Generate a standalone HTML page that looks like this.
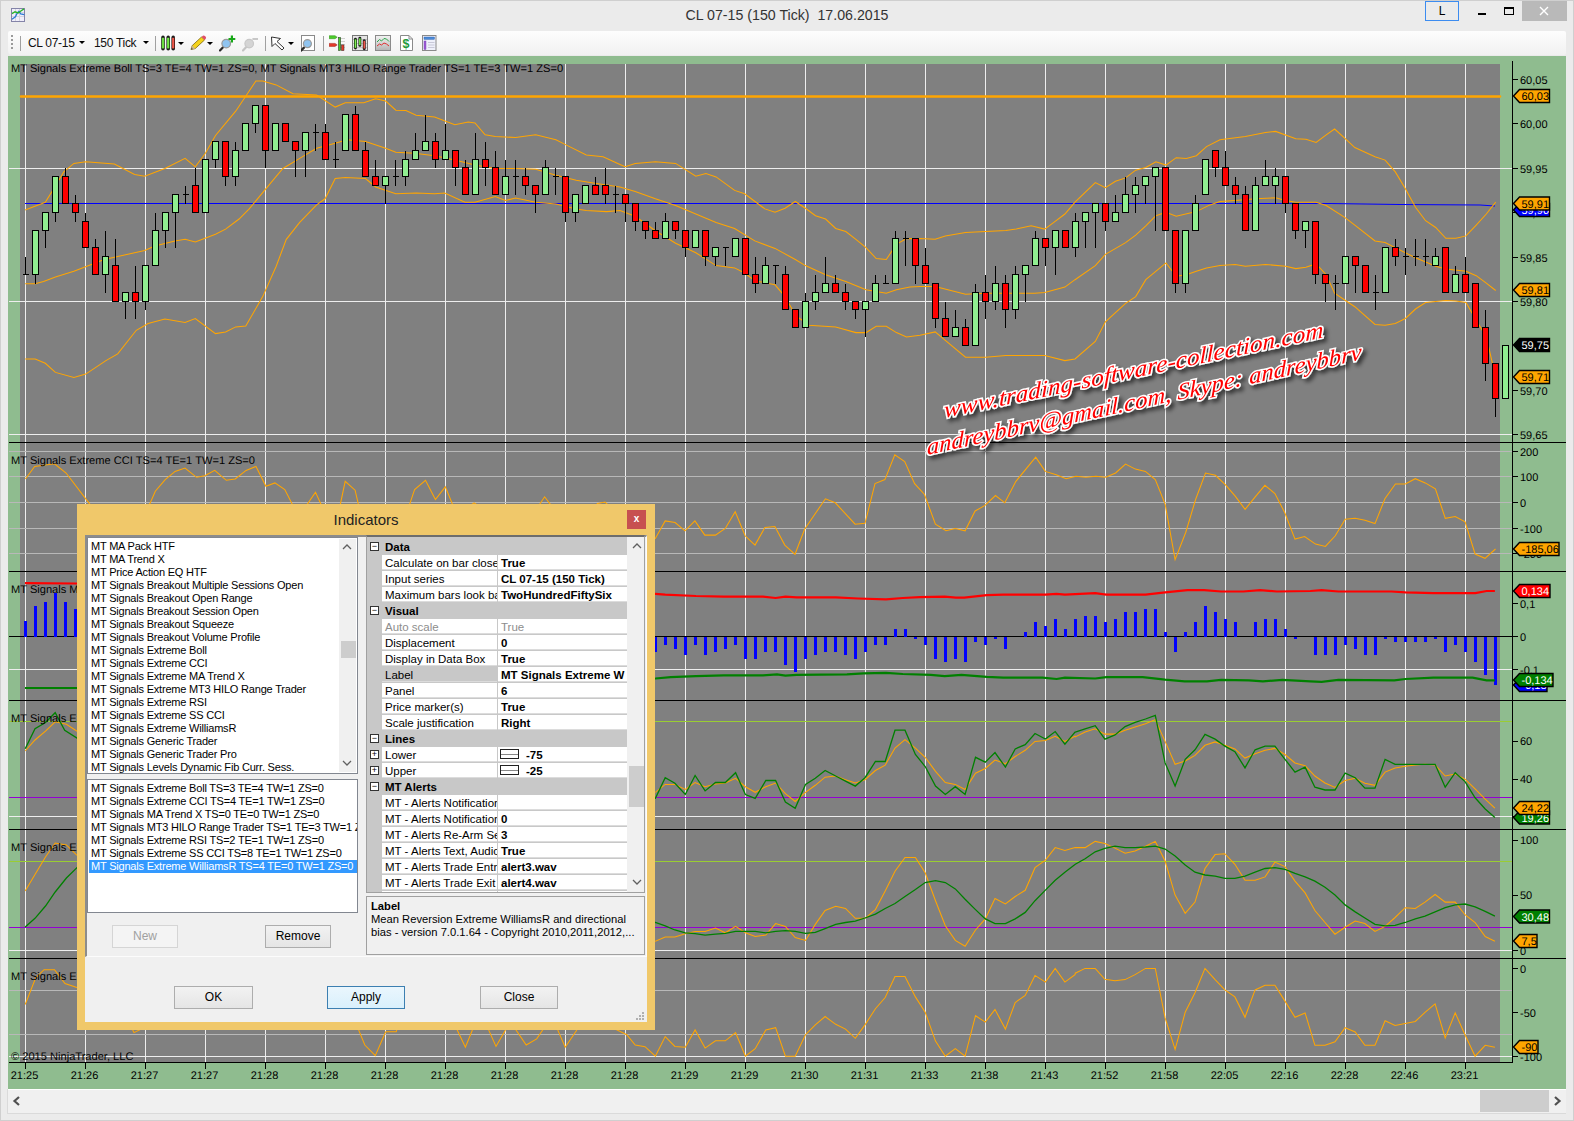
<!DOCTYPE html>
<html><head><meta charset="utf-8">
<style>
html,body{margin:0;padding:0}
body{width:1574px;height:1121px;position:relative;overflow:hidden;background:#ebebeb;font-family:"Liberation Sans",sans-serif;}
.abs{position:absolute}
#title{position:absolute;left:0;top:0;width:1574px;height:30px;text-align:center;font-size:14.2px;line-height:30px;color:#333}
#toolbar{position:absolute;left:8px;top:31px;width:1558px;height:24px;background:linear-gradient(#fdfdfd,#f1f1f1);border-radius:2px 2px 2px 4px}
.tb{position:absolute;top:0;height:24px;line-height:24px;font-size:12px;letter-spacing:-0.3px;color:#111}
.sep{position:absolute;top:5px;width:1px;height:15px;background:#a0a0a0}
.dd{position:absolute;top:10px;width:0;height:0;border-left:3px solid transparent;border-right:3px solid transparent;border-top:3px solid #000}
#scroll{position:absolute;left:8px;top:1089px;width:1558px;height:24px;background:#f0f0f0}
/* dialog */
#dlg{position:absolute;left:77px;top:504px;width:578px;height:526px;background:#f0c86a;box-sizing:border-box}
#dlgtitle{position:absolute;left:0;top:0;width:578px;height:31px;text-align:center;line-height:31px;font-size:15px;color:#222}
#dlgclose{position:absolute;left:550px;top:6px;width:19px;height:19px;background:#c75050;color:#fff;font-size:10px;font-weight:bold;line-height:18px;text-align:center}
#client{position:absolute;left:8px;top:31px;width:561px;height:487px;background:#f0f0f0}
.lb{position:absolute;background:#fff;border:1px solid #828790;box-sizing:border-box;font-size:11px;color:#000;overflow:hidden}
.lb div{height:13px;line-height:13px;padding-left:3px;white-space:nowrap;letter-spacing:-0.2px}
.btn{position:absolute;height:23px;box-sizing:border-box;border:1px solid #adadad;background:linear-gradient(#f2f2f2,#e5e5e5);font-size:12px;text-align:center;line-height:21px;color:#000}
#pg{position:absolute;left:288px;top:2px;width:280px;height:356px;border:1px solid #a0a0a0;box-sizing:border-box;background:#c8c8c8;overflow:hidden}
.row{position:absolute;left:0;height:16px;width:260px;font-size:11.5px;line-height:16px;white-space:nowrap}
.cat{background:#c8c8c8;font-weight:bold}
.nm{position:absolute;left:15px;width:115px;height:15px;background:#fff;padding-left:3px;box-sizing:border-box;overflow:hidden;border-bottom:1px solid #dcdcdc}
.vl{position:absolute;left:131px;width:129px;height:15px;background:#fff;padding-left:3px;box-sizing:border-box;overflow:hidden;font-weight:bold;border-bottom:1px solid #dcdcdc}
.exp{position:absolute;left:3px;top:3px;width:9px;height:9px;box-sizing:border-box;border:1px solid #333;background:#fff;font-size:9px;line-height:7px;text-align:center;font-weight:normal}
</style></head><body>
<div id="title">CL 07-15 (150 Tick)&nbsp; 17.06.2015</div>
<!-- app icon -->
<svg class="abs" style="left:11px;top:8px" width="15" height="15"><rect x="0.5" y="0.5" width="13" height="13" fill="#f0eefa" stroke="#8484a8"/><g stroke="#d4d4e0" stroke-width="1"><path d="M4.5,1 V13 M8.5,1 V13 M1,4.5 H13 M1,8.5 H13"/></g><polyline points="1,11.3 4.4,8.8 5.8,5.9 7.9,3.4 9.7,5.9 13.3,6.6" fill="none" stroke="#2a7ad4" stroke-width="1.3"/><polyline points="1,5.6 4,3.8 7.2,4.9 9.5,3.2 13,0.9" fill="none" stroke="#28b428" stroke-width="1.3"/></svg>
<!-- title buttons -->
<div class="abs" style="left:1425px;top:1px;width:34px;height:20px;border:1px solid #3c8cf0;box-sizing:border-box;font-size:12px;text-align:center;line-height:18px;color:#000">L</div>
<div class="abs" style="left:1478px;top:13px;width:8px;height:2px;background:#000"></div>
<div class="abs" style="left:1504px;top:7px;width:10px;height:8px;border:1px solid #000;border-top-width:2px;box-sizing:border-box"></div>
<div class="abs" style="left:1522px;top:1px;width:45px;height:20px;background:#b9b9b9"></div>
<svg class="abs" style="left:1539px;top:6px" width="10" height="10"><path d="M1,1 L9,9 M9,1 L1,9" stroke="#fff" stroke-width="1.4"/></svg>
<!-- toolbar -->
<div id="toolbar">
 <div class="abs" style="left:3px;top:4px;width:2px;height:15px;background:repeating-linear-gradient(#9a9a9a 0 2px,transparent 2px 4px)"></div>
 <div class="sep" style="left:12px"></div>
 <div class="tb" style="left:20px">CL 07-15</div><div class="dd" style="left:71px"></div>
 <div class="tb" style="left:86px">150 Tick</div><div class="dd" style="left:135px"></div>
 <div class="sep" style="left:147px"></div>
 <svg class="abs" style="left:152px;top:4px" width="17" height="17"><defs><linearGradient id="gg" x1="0" x2="1"><stop offset="0" stop-color="#3fbf1f"/><stop offset="0.5" stop-color="#8af05a"/><stop offset="1" stop-color="#3fbf1f"/></linearGradient><linearGradient id="rg" x1="0" x2="1"><stop offset="0" stop-color="#c8281e"/><stop offset="0.5" stop-color="#f2705f"/><stop offset="1" stop-color="#c8281e"/></linearGradient></defs>
 <g><rect x="1.2" y="0.6" width="3.6" height="15" rx="1.8" fill="#1c1c1c"/><rect x="1.8" y="2.8" width="2.4" height="10.6" fill="url(#gg)"/></g>
 <g transform="translate(5.2,0)"><rect x="1.2" y="0.6" width="3.6" height="15" rx="1.8" fill="#1c1c1c"/><rect x="1.8" y="2.8" width="2.4" height="10.6" fill="url(#gg)"/></g>
 <g transform="translate(10.2,0)"><rect x="1.2" y="0.6" width="3.6" height="15" rx="1.8" fill="#1c1c1c"/><rect x="1.8" y="2.8" width="2.4" height="10.6" fill="url(#rg)"/></g></svg><div class="dd" style="left:170px;top:11px"></div>
 <svg class="abs" style="left:182px;top:4px" width="17" height="17"><path d="M1,14.6 L2.2,10.6 L11.6,1.9 L14.6,4.9 L5.2,13.6 Z" fill="#f5d31a" stroke="#7a6410" stroke-width="0.8"/><path d="M11.6,1.9 L12.9,0.8 Q13.9,0.1 14.9,1 L15.7,1.8 Q16.5,2.8 15.7,3.7 L14.6,4.9 Z" fill="#e0506a"/><path d="M1,14.6 L2.2,10.6 L5.2,13.6 Z" fill="#cdb68c"/><path d="M1,14.6 L1.5,12.8 L2.9,14 Z" fill="#444"/></svg><div class="dd" style="left:199px;top:11px"></div>
 <svg class="abs" style="left:211px;top:3px" width="19" height="18"><path d="M1,16.4 L4,13.3" stroke="#2a2a2a" stroke-width="2.2" stroke-linecap="round"/><circle cx="7.2" cy="9.6" r="4.3" fill="#90c4f0" stroke="#9a9a9a" stroke-width="1.2"/><path d="M12.9,1.6 V8.4 M9.5,5 H16.3" stroke="#18a818" stroke-width="2.2"/></svg>
 <svg class="abs" style="left:234px;top:3px" width="19" height="18"><path d="M1,16.4 L4,13.3" stroke="#c4c4c4" stroke-width="2.2" stroke-linecap="round"/><circle cx="7.2" cy="9.6" r="4.3" fill="#d4d4d4" stroke="#c8c8c8" stroke-width="1.2"/><path d="M10.4,5 H16" stroke="#c8c8c8" stroke-width="2"/></svg>
 <div class="sep" style="left:257px"></div>
 <svg class="abs" style="left:263px;top:4px" width="16" height="17"><path d="M0.5,2 L1,11.5 L4,8.5 L11,15 L13,13 L6,6.5 L9.5,3.5 Z" fill="#fff" stroke="#333" stroke-width="1" stroke-linejoin="round"/></svg><div class="dd" style="left:280px;top:11px"></div>
 <svg class="abs" style="left:293px;top:4px" width="15" height="17"><rect x="0.5" y="0.5" width="13" height="15" fill="#fff" stroke="#8a8a8a"/><path d="M0,15.6 L3,12.6" stroke="#2a2a2a" stroke-width="2.2" stroke-linecap="round"/><circle cx="6.4" cy="8.7" r="4" fill="#90c4f0" stroke="#9a9a9a" stroke-width="1.2"/></svg>
 <div class="sep" style="left:315px"></div>
 <svg class="abs" style="left:321px;top:4px" width="17" height="17"><g stroke="#d0d0d0" stroke-width="1"><path d="M9,3.5 H16 M9,6.5 H16 M9,9.5 H16 M9,12.5 H16"/></g><path d="M0.2,0.7 H6 L8.2,2.2 L6,3.7 H0.2 Z" fill="#4ccc2c" stroke="#2e8a1a" stroke-width="0.5"/><path d="M0.2,8.4 H6 L8.2,9.9 L6,11.4 H0.2 Z" fill="#e53a2a" stroke="#9a2018" stroke-width="0.5"/><rect x="9.4" y="2.4" width="2.3" height="13.2" fill="#4ccc2c" stroke="#2a2a2a" stroke-width="0.5"/><rect x="12.4" y="9.9" width="2.6" height="5.7" fill="#e53a2a" stroke="#2a2a2a" stroke-width="0.5"/></svg>
 <svg class="abs" style="left:344px;top:4px" width="17" height="17"><rect x="0.5" y="0.5" width="15" height="15" fill="#e4e4e4" stroke="#777"/><g stroke="#c0c0c0"><path d="M1,4.5 H15 M1,8.5 H15 M1,12.5 H15"/></g>
  <g transform="translate(2,1.8) scale(0.85)"><rect x="0" y="1" width="3.4" height="14" rx="1.7" fill="#1c1c1c"/><rect x="0.6" y="3" width="2.2" height="10" fill="url(#gg)"/></g>
  <g transform="translate(6.4,0.8) scale(0.85)"><rect x="0" y="1" width="3.4" height="12" rx="1.7" fill="#1c1c1c"/><rect x="0.6" y="3" width="2.2" height="8" fill="url(#gg)"/></g>
  <g transform="translate(10.8,3.3) scale(0.85)"><rect x="0" y="1" width="3.4" height="13" rx="1.7" fill="#1c1c1c"/><rect x="0.6" y="3" width="2.2" height="9" fill="url(#rg)"/></g></svg>
 <svg class="abs" style="left:367px;top:4px" width="17" height="17"><defs><linearGradient id="cg" x1="0" y1="0" x2="0" y2="1"><stop offset="0" stop-color="#f4f4f4"/><stop offset="1" stop-color="#b4b4b4"/></linearGradient></defs><rect x="0.5" y="0.5" width="15" height="15" fill="url(#cg)" stroke="#8a8a8a"/><polyline points="2,7 4.5,4.5 6.5,6 9,3.5 11.5,4 14,6.5" fill="none" stroke="#2ca84a" stroke-width="1"/><polyline points="2,11 4.5,9 6.5,10 9,8 11.5,9 14,11" fill="none" stroke="#e03030" stroke-width="1"/></svg>
 <svg class="abs" style="left:392px;top:4px" width="14" height="17"><path d="M0.5,0.5 H9 L12.5,4 V15.5 H0.5 Z" fill="#fff" stroke="#8a8a8a"/><path d="M9,0.5 V4 H12.5" fill="none" stroke="#8a8a8a"/><text x="2.6" y="13.2" font-size="12.5" font-weight="bold" fill="#1f9a3a" font-family="Liberation Sans">$</text></svg>
 <svg class="abs" style="left:414px;top:4px" width="16" height="17"><rect x="0.5" y="0.5" width="13.5" height="15" fill="#eef0fa" stroke="#8a8a8a"/><rect x="2" y="2" width="10.5" height="2.4" fill="#4a8ad8" stroke="#2a5aa8" stroke-width="0.4"/><rect x="2" y="6" width="2" height="8.5" fill="#a05ad8" stroke="#6a3aa8" stroke-width="0.4"/><g stroke="#c8c8d8"><path d="M6,7.5 H12.5 M6,10 H12.5 M6,12.5 H12.5"/></g></svg>
</div>
<svg width="1574" height="1121" viewBox="0 0 1574 1121" style="position:absolute;left:0;top:0" shape-rendering="crispEdges">
<rect x="8" y="56" width="1558" height="1033" fill="#8fbc8f"/>
<rect x="20" y="64" width="1480" height="378" fill="#808080"/>
<rect x="20" y="443" width="1480" height="128" fill="#808080"/>
<rect x="20" y="572" width="1480" height="128" fill="#808080"/>
<rect x="20" y="701" width="1480" height="128" fill="#808080"/>
<rect x="20" y="830" width="1480" height="128" fill="#808080"/>
<rect x="20" y="959" width="1480" height="103" fill="#808080"/>
<line x1="25.5" y1="64" x2="25.5" y2="1062" stroke="#eeeeee" stroke-width="1"/>
<line x1="85.5" y1="64" x2="85.5" y2="1062" stroke="#eeeeee" stroke-width="1"/>
<line x1="145.5" y1="64" x2="145.5" y2="1062" stroke="#eeeeee" stroke-width="1"/>
<line x1="205.5" y1="64" x2="205.5" y2="1062" stroke="#eeeeee" stroke-width="1"/>
<line x1="265.5" y1="64" x2="265.5" y2="1062" stroke="#eeeeee" stroke-width="1"/>
<line x1="325.5" y1="64" x2="325.5" y2="1062" stroke="#eeeeee" stroke-width="1"/>
<line x1="385.5" y1="64" x2="385.5" y2="1062" stroke="#eeeeee" stroke-width="1"/>
<line x1="445.5" y1="64" x2="445.5" y2="1062" stroke="#eeeeee" stroke-width="1"/>
<line x1="505.5" y1="64" x2="505.5" y2="1062" stroke="#eeeeee" stroke-width="1"/>
<line x1="565.5" y1="64" x2="565.5" y2="1062" stroke="#eeeeee" stroke-width="1"/>
<line x1="625.5" y1="64" x2="625.5" y2="1062" stroke="#eeeeee" stroke-width="1"/>
<line x1="685.5" y1="64" x2="685.5" y2="1062" stroke="#eeeeee" stroke-width="1"/>
<line x1="745.5" y1="64" x2="745.5" y2="1062" stroke="#eeeeee" stroke-width="1"/>
<line x1="805.5" y1="64" x2="805.5" y2="1062" stroke="#eeeeee" stroke-width="1"/>
<line x1="865.5" y1="64" x2="865.5" y2="1062" stroke="#eeeeee" stroke-width="1"/>
<line x1="925.5" y1="64" x2="925.5" y2="1062" stroke="#eeeeee" stroke-width="1"/>
<line x1="985.5" y1="64" x2="985.5" y2="1062" stroke="#eeeeee" stroke-width="1"/>
<line x1="1045.5" y1="64" x2="1045.5" y2="1062" stroke="#eeeeee" stroke-width="1"/>
<line x1="1105.5" y1="64" x2="1105.5" y2="1062" stroke="#eeeeee" stroke-width="1"/>
<line x1="1165.5" y1="64" x2="1165.5" y2="1062" stroke="#eeeeee" stroke-width="1"/>
<line x1="1225.5" y1="64" x2="1225.5" y2="1062" stroke="#eeeeee" stroke-width="1"/>
<line x1="1285.5" y1="64" x2="1285.5" y2="1062" stroke="#eeeeee" stroke-width="1"/>
<line x1="1345.5" y1="64" x2="1345.5" y2="1062" stroke="#eeeeee" stroke-width="1"/>
<line x1="1405.5" y1="64" x2="1405.5" y2="1062" stroke="#eeeeee" stroke-width="1"/>
<line x1="1465.5" y1="64" x2="1465.5" y2="1062" stroke="#eeeeee" stroke-width="1"/>
<line x1="9" y1="168.5" x2="1512" y2="168.5" stroke="#eeeeee" stroke-width="1"/>
<line x1="9" y1="301.5" x2="1512" y2="301.5" stroke="#eeeeee" stroke-width="1"/>
<line x1="9" y1="434.5" x2="1512" y2="434.5" stroke="#eeeeee" stroke-width="1"/>
<line x1="9" y1="451.5" x2="1512" y2="451.5" stroke="#b8b8b8" stroke-width="1"/>
<line x1="9" y1="476.5" x2="1512" y2="476.5" stroke="#b8b8b8" stroke-width="1"/>
<line x1="9" y1="502.5" x2="1512" y2="502.5" stroke="#b8b8b8" stroke-width="1"/>
<line x1="9" y1="528.5" x2="1512" y2="528.5" stroke="#b8b8b8" stroke-width="1"/>
<line x1="9" y1="553.5" x2="1512" y2="553.5" stroke="#b8b8b8" stroke-width="1"/>
<line x1="9" y1="669.5" x2="1512" y2="669.5" stroke="#eeeeee"/>
<line x1="9" y1="816.5" x2="1512" y2="816.5" stroke="#eeeeee"/>
<line x1="9" y1="950.5" x2="1512" y2="950.5" stroke="#eeeeee"/>
<line x1="9" y1="990.5" x2="1512" y2="990.5" stroke="#b8b8b8"/>
<line x1="9" y1="1034.5" x2="1512" y2="1034.5" stroke="#b8b8b8"/>
<line x1="9" y1="1056.5" x2="1512" y2="1056.5" stroke="#eeeeee"/>
<line x1="21" y1="96.5" x2="1500" y2="96.5" stroke="#ffa500" stroke-width="2.6" stroke-linecap="round" shape-rendering="geometricPrecision"/>
<polyline points="25,203.5 1330,203.5 1400,204.5 1480,205 1495,206" fill="none" stroke="#0000ff" stroke-width="1.1" shape-rendering="geometricPrecision"/>
<polyline points="25.1,209.9 45.3,202.2 53.7,188.7 63.8,171.9 73.9,163.4 85.7,161.7 114.4,164.1 134.6,174.5 144.7,176.2 164.9,168.5 185.1,158.4 195.3,166.8 205.4,153.3 215.5,135.5 235.7,111.2 255.9,80.9 262.7,80.9 276.2,84.9 293.0,93.7 316.6,95.0 335.2,107.1 345.3,102.8 363.8,102.8 375.6,98.7 385.7,101.1 395.8,110.2 405.9,110.5 416.1,115.2 434.6,116.9 454.8,124.7 468.3,122.0 475.0,123.0 485.1,134.8 495.3,136.5 515.5,137.5 535.7,134.8 555.9,139.8 566.0,144.9 586.3,155.0 603.1,156.7 620.0,164.4 625.1,166.8 635.2,163.4 655.4,161.7 675.6,163.4 695.8,176.2 705.9,173.5 716.1,176.9 734.6,190.4 744.7,193.8 764.9,208.9 775.0,212.3 785.1,208.3 795.3,201.5 805.4,208.3 815.5,215.7 825.6,219.0 835.7,228.5 845.8,231.5 855.9,239.3 866.0,247.7 876.2,258.5 886.3,259.5 896.4,244.3 906.5,238.6 920.0,238.6 935.2,239.3 945.3,235.9 965.5,232.5 985.7,231.5 1005.9,230.5 1016.1,229.1 1031.2,225.8 1044.7,229.1 1054.8,221.7 1064.9,214.0 1075.0,202.2 1095.3,182.6 1105.4,187.7 1115.5,181.3 1125.6,177.9 1135.7,170.2 1145.8,167.5 1155.9,161.7 1166.0,165.1 1176.2,157.7 1186.3,158.4 1196.4,155.7 1206.5,146.6 1220.0,139.8 1245.3,136.5 1265.5,132.4 1275.6,131.4 1295.8,138.8 1305.9,139.2 1316.1,142.5 1326.2,134.8 1334.6,129.0 1344.7,138.1 1354.8,147.6 1375.0,156.7 1385.1,160.1 1395.3,171.9 1405.4,188.7 1415.5,207.2 1425.6,220.7 1435.7,227.5 1445.8,238.3 1455.9,238.3 1466.0,235.9 1476.2,225.1 1486.3,214.0 1495.7,202.2" fill="none" stroke="#ffa500" stroke-width="1.05" shape-rendering="geometricPrecision"/>
<polyline points="25.1,283.8 35.2,283.8 43.6,281.4 55.4,277.0 73.9,271.3 104.3,259.5 124.5,255.1 144.7,250.4 154.8,246.0 175.0,240.9 185.1,239.3 195.3,242.0 215.5,234.2 225.6,229.1 239.1,219.0 249.2,208.9 266.0,188.7 282.9,168.5 299.7,158.4 316.6,148.3 335.2,143.2 347.0,139.8 365.5,141.5 385.7,148.3 395.8,152.3 414.4,153.3 434.6,155.7 454.8,160.1 475.0,165.1 495.3,168.5 515.5,168.5 535.7,169.2 555.9,175.2 576.2,180.3 596.4,183.6 620.0,187.0 635.2,191.4 655.4,198.8 675.6,205.6 695.8,214.0 716.1,222.4 734.6,228.5 754.8,240.9 775.0,248.4 795.3,259.5 805.4,265.6 825.6,274.7 845.8,281.4 866.0,289.8 886.3,293.2 896.4,289.8 909.9,287.1 920.0,286.4 935.2,286.4 965.5,294.2 985.7,293.2 1005.9,293.2 1034.6,293.2 1044.7,292.5 1064.9,287.1 1075.0,279.7 1095.3,265.6 1105.4,254.4 1125.6,242.6 1135.7,235.2 1145.8,225.8 1155.9,215.7 1166.0,212.3 1176.2,216.3 1196.4,211.6 1209.9,204.9 1220.0,201.5 1235.2,200.5 1255.4,198.8 1275.6,197.8 1285.7,200.5 1295.8,202.2 1316.1,202.2 1326.2,205.6 1344.7,217.4 1354.8,225.1 1375.0,240.9 1385.1,242.6 1395.3,247.7 1415.5,257.8 1435.7,266.2 1445.8,268.9 1466.0,271.3 1476.2,275.7 1486.3,283.1 1495.7,290.5" fill="none" stroke="#ffa500" stroke-width="1.05" shape-rendering="geometricPrecision"/>
<polyline points="25.1,358.9 35.2,358.9 45.3,363.3 55.4,372.4 73.9,377.4 85.7,374.1 105.9,360.6 117.7,353.9 136.3,330.3 148.1,323.5 164.9,319.1 185.1,322.5 195.3,318.5 215.5,333.6 225.6,331.9 235.7,326.9 245.8,325.9 262.7,296.6 276.2,266.2 286.3,239.3 299.7,222.4 316.6,204.9 325.1,198.8 335.2,178.6 345.3,177.6 365.5,178.6 375.6,187.0 395.8,193.8 416.1,193.1 434.6,193.8 444.7,193.1 464.9,202.2 475.0,202.2 495.3,196.5 505.4,200.5 515.5,198.1 535.7,202.2 555.9,203.9 576.2,208.9 586.3,210.6 606.5,211.6 620.0,210.6 635.2,216.3 655.4,230.8 675.6,243.3 695.8,252.7 716.1,265.6 734.6,267.9 744.7,273.0 754.8,280.7 775.0,284.8 785.1,296.6 795.3,315.1 808.7,325.2 835.7,326.9 855.9,332.6 866.0,332.6 876.2,326.2 886.3,326.2 896.4,332.6 906.5,337.0 920.0,335.3 935.2,331.9 945.3,340.4 965.5,357.2 985.7,357.2 1005.9,355.5 1044.7,355.5 1064.9,360.6 1075.0,358.9 1095.3,341.4 1105.4,321.8 1125.6,303.3 1135.7,296.6 1145.8,279.7 1166.0,262.9 1176.2,276.3 1186.3,274.7 1196.4,271.3 1206.5,267.9 1220.0,265.6 1235.2,264.5 1245.3,266.2 1265.5,264.5 1285.7,266.2 1295.8,268.6 1305.9,267.2 1316.1,263.9 1326.2,274.7 1334.6,293.2 1354.8,306.7 1375.0,324.5 1385.1,325.2 1395.3,323.5 1405.4,318.5 1415.5,309.0 1425.6,302.6 1445.8,300.6 1455.9,300.9 1466.0,302.6 1476.2,320.2 1486.3,337.0 1495.7,377.4" fill="none" stroke="#ffa500" stroke-width="1.05" shape-rendering="geometricPrecision"/>
<line x1="25.5" y1="256.5" x2="25.5" y2="274.5" stroke="#000" stroke-width="1"/>
<line x1="22.5" y1="274.5" x2="28.5" y2="274.5" stroke="#000" stroke-width="1"/>
<line x1="35.5" y1="230.5" x2="35.5" y2="283.5" stroke="#000" stroke-width="1"/>
<rect x="32.5" y="230.5" width="6" height="44.0" fill="#90ee90" stroke="#000" stroke-width="1"/>
<line x1="45.5" y1="212.5" x2="45.5" y2="247.5" stroke="#000" stroke-width="1"/>
<rect x="42.5" y="212.5" width="6" height="18.0" fill="#90ee90" stroke="#000" stroke-width="1"/>
<line x1="55.5" y1="176.5" x2="55.5" y2="221.5" stroke="#000" stroke-width="1"/>
<rect x="52.5" y="176.5" width="6" height="36.0" fill="#90ee90" stroke="#000" stroke-width="1"/>
<line x1="65.5" y1="167.5" x2="65.5" y2="203.5" stroke="#000" stroke-width="1"/>
<rect x="62.5" y="176.5" width="6" height="27.0" fill="#ff0000" stroke="#000" stroke-width="1"/>
<line x1="75.5" y1="194.5" x2="75.5" y2="221.5" stroke="#000" stroke-width="1"/>
<rect x="72.5" y="203.5" width="6" height="9.0" fill="#ff0000" stroke="#000" stroke-width="1"/>
<line x1="85.5" y1="212.5" x2="85.5" y2="247.5" stroke="#000" stroke-width="1"/>
<rect x="82.5" y="221.5" width="6" height="26.0" fill="#ff0000" stroke="#000" stroke-width="1"/>
<line x1="95.5" y1="238.5" x2="95.5" y2="274.5" stroke="#000" stroke-width="1"/>
<rect x="92.5" y="247.5" width="6" height="27.0" fill="#ff0000" stroke="#000" stroke-width="1"/>
<line x1="105.5" y1="230.5" x2="105.5" y2="292.5" stroke="#000" stroke-width="1"/>
<rect x="102.5" y="256.5" width="6" height="18.0" fill="#90ee90" stroke="#000" stroke-width="1"/>
<line x1="115.5" y1="238.5" x2="115.5" y2="301.5" stroke="#000" stroke-width="1"/>
<rect x="112.5" y="265.5" width="6" height="36.0" fill="#ff0000" stroke="#000" stroke-width="1"/>
<line x1="125.5" y1="292.5" x2="125.5" y2="318.5" stroke="#000" stroke-width="1"/>
<rect x="122.5" y="292.5" width="6" height="9.0" fill="#90ee90" stroke="#000" stroke-width="1"/>
<line x1="135.5" y1="265.5" x2="135.5" y2="318.5" stroke="#000" stroke-width="1"/>
<rect x="132.5" y="292.5" width="6" height="9.0" fill="#ff0000" stroke="#000" stroke-width="1"/>
<line x1="145.5" y1="265.5" x2="145.5" y2="309.5" stroke="#000" stroke-width="1"/>
<rect x="142.5" y="265.5" width="6" height="36.0" fill="#90ee90" stroke="#000" stroke-width="1"/>
<line x1="155.5" y1="212.5" x2="155.5" y2="265.5" stroke="#000" stroke-width="1"/>
<rect x="152.5" y="230.5" width="6" height="35.0" fill="#90ee90" stroke="#000" stroke-width="1"/>
<line x1="165.5" y1="212.5" x2="165.5" y2="247.5" stroke="#000" stroke-width="1"/>
<rect x="162.5" y="212.5" width="6" height="18.0" fill="#90ee90" stroke="#000" stroke-width="1"/>
<line x1="175.5" y1="194.5" x2="175.5" y2="247.5" stroke="#000" stroke-width="1"/>
<rect x="172.5" y="194.5" width="6" height="18.0" fill="#90ee90" stroke="#000" stroke-width="1"/>
<line x1="185.5" y1="185.5" x2="185.5" y2="203.5" stroke="#000" stroke-width="1"/>
<line x1="182.5" y1="194.5" x2="188.5" y2="194.5" stroke="#000" stroke-width="1"/>
<line x1="195.5" y1="167.5" x2="195.5" y2="212.5" stroke="#000" stroke-width="1"/>
<rect x="192.5" y="185.5" width="6" height="27.0" fill="#ff0000" stroke="#000" stroke-width="1"/>
<line x1="205.5" y1="159.5" x2="205.5" y2="212.5" stroke="#000" stroke-width="1"/>
<rect x="202.5" y="159.5" width="6" height="53.0" fill="#90ee90" stroke="#000" stroke-width="1"/>
<line x1="215.5" y1="141.5" x2="215.5" y2="167.5" stroke="#000" stroke-width="1"/>
<rect x="212.5" y="141.5" width="6" height="18.0" fill="#90ee90" stroke="#000" stroke-width="1"/>
<line x1="225.5" y1="141.5" x2="225.5" y2="185.5" stroke="#000" stroke-width="1"/>
<rect x="222.5" y="141.5" width="6" height="35.0" fill="#ff0000" stroke="#000" stroke-width="1"/>
<line x1="235.5" y1="141.5" x2="235.5" y2="185.5" stroke="#000" stroke-width="1"/>
<rect x="232.5" y="150.5" width="6" height="26.0" fill="#90ee90" stroke="#000" stroke-width="1"/>
<line x1="245.5" y1="123.5" x2="245.5" y2="150.5" stroke="#000" stroke-width="1"/>
<rect x="242.5" y="123.5" width="6" height="27.0" fill="#90ee90" stroke="#000" stroke-width="1"/>
<line x1="255.5" y1="105.5" x2="255.5" y2="132.5" stroke="#000" stroke-width="1"/>
<rect x="252.5" y="105.5" width="6" height="18.0" fill="#90ee90" stroke="#000" stroke-width="1"/>
<line x1="265.5" y1="105.5" x2="265.5" y2="167.5" stroke="#000" stroke-width="1"/>
<rect x="262.5" y="105.5" width="6" height="45.0" fill="#ff0000" stroke="#000" stroke-width="1"/>
<line x1="275.5" y1="123.5" x2="275.5" y2="150.5" stroke="#000" stroke-width="1"/>
<rect x="272.5" y="123.5" width="6" height="27.0" fill="#90ee90" stroke="#000" stroke-width="1"/>
<line x1="285.5" y1="123.5" x2="285.5" y2="141.5" stroke="#000" stroke-width="1"/>
<rect x="282.5" y="123.5" width="6" height="18.0" fill="#ff0000" stroke="#000" stroke-width="1"/>
<line x1="295.5" y1="141.5" x2="295.5" y2="176.5" stroke="#000" stroke-width="1"/>
<rect x="292.5" y="141.5" width="6" height="9.0" fill="#ff0000" stroke="#000" stroke-width="1"/>
<line x1="305.5" y1="132.5" x2="305.5" y2="176.5" stroke="#000" stroke-width="1"/>
<rect x="302.5" y="132.5" width="6" height="18.0" fill="#90ee90" stroke="#000" stroke-width="1"/>
<line x1="315.5" y1="123.5" x2="315.5" y2="150.5" stroke="#000" stroke-width="1"/>
<line x1="312.5" y1="132.5" x2="318.5" y2="132.5" stroke="#000" stroke-width="1"/>
<line x1="325.5" y1="123.5" x2="325.5" y2="159.5" stroke="#000" stroke-width="1"/>
<rect x="322.5" y="132.5" width="6" height="27.0" fill="#ff0000" stroke="#000" stroke-width="1"/>
<line x1="335.5" y1="141.5" x2="335.5" y2="167.5" stroke="#000" stroke-width="1"/>
<line x1="332.5" y1="159.5" x2="338.5" y2="159.5" stroke="#000" stroke-width="1"/>
<line x1="345.5" y1="114.5" x2="345.5" y2="150.5" stroke="#000" stroke-width="1"/>
<rect x="342.5" y="114.5" width="6" height="36.0" fill="#90ee90" stroke="#000" stroke-width="1"/>
<line x1="355.5" y1="105.5" x2="355.5" y2="150.5" stroke="#000" stroke-width="1"/>
<rect x="352.5" y="114.5" width="6" height="36.0" fill="#ff0000" stroke="#000" stroke-width="1"/>
<line x1="365.5" y1="141.5" x2="365.5" y2="176.5" stroke="#000" stroke-width="1"/>
<rect x="362.5" y="150.5" width="6" height="26.0" fill="#ff0000" stroke="#000" stroke-width="1"/>
<line x1="375.5" y1="159.5" x2="375.5" y2="185.5" stroke="#000" stroke-width="1"/>
<rect x="372.5" y="176.5" width="6" height="9.0" fill="#ff0000" stroke="#000" stroke-width="1"/>
<line x1="385.5" y1="176.5" x2="385.5" y2="203.5" stroke="#000" stroke-width="1"/>
<rect x="382.5" y="176.5" width="6" height="9.0" fill="#90ee90" stroke="#000" stroke-width="1"/>
<line x1="395.5" y1="159.5" x2="395.5" y2="185.5" stroke="#000" stroke-width="1"/>
<line x1="392.5" y1="176.5" x2="398.5" y2="176.5" stroke="#000" stroke-width="1"/>
<line x1="405.5" y1="150.5" x2="405.5" y2="185.5" stroke="#000" stroke-width="1"/>
<rect x="402.5" y="159.5" width="6" height="17.0" fill="#90ee90" stroke="#000" stroke-width="1"/>
<line x1="415.5" y1="132.5" x2="415.5" y2="159.5" stroke="#000" stroke-width="1"/>
<rect x="412.5" y="150.5" width="6" height="9.0" fill="#90ee90" stroke="#000" stroke-width="1"/>
<line x1="425.5" y1="114.5" x2="425.5" y2="150.5" stroke="#000" stroke-width="1"/>
<rect x="422.5" y="141.5" width="6" height="9.0" fill="#90ee90" stroke="#000" stroke-width="1"/>
<line x1="435.5" y1="132.5" x2="435.5" y2="167.5" stroke="#000" stroke-width="1"/>
<rect x="432.5" y="141.5" width="6" height="18.0" fill="#ff0000" stroke="#000" stroke-width="1"/>
<line x1="445.5" y1="123.5" x2="445.5" y2="159.5" stroke="#000" stroke-width="1"/>
<rect x="442.5" y="150.5" width="6" height="9.0" fill="#90ee90" stroke="#000" stroke-width="1"/>
<line x1="455.5" y1="150.5" x2="455.5" y2="185.5" stroke="#000" stroke-width="1"/>
<rect x="452.5" y="150.5" width="6" height="17.0" fill="#ff0000" stroke="#000" stroke-width="1"/>
<line x1="465.5" y1="159.5" x2="465.5" y2="194.5" stroke="#000" stroke-width="1"/>
<rect x="462.5" y="167.5" width="6" height="27.0" fill="#ff0000" stroke="#000" stroke-width="1"/>
<line x1="475.5" y1="132.5" x2="475.5" y2="194.5" stroke="#000" stroke-width="1"/>
<rect x="472.5" y="159.5" width="6" height="35.0" fill="#90ee90" stroke="#000" stroke-width="1"/>
<line x1="485.5" y1="141.5" x2="485.5" y2="185.5" stroke="#000" stroke-width="1"/>
<rect x="482.5" y="159.5" width="6" height="8.0" fill="#ff0000" stroke="#000" stroke-width="1"/>
<line x1="495.5" y1="150.5" x2="495.5" y2="194.5" stroke="#000" stroke-width="1"/>
<rect x="492.5" y="167.5" width="6" height="27.0" fill="#ff0000" stroke="#000" stroke-width="1"/>
<line x1="505.5" y1="159.5" x2="505.5" y2="194.5" stroke="#000" stroke-width="1"/>
<rect x="502.5" y="176.5" width="6" height="18.0" fill="#90ee90" stroke="#000" stroke-width="1"/>
<line x1="515.5" y1="159.5" x2="515.5" y2="194.5" stroke="#000" stroke-width="1"/>
<line x1="512.5" y1="176.5" x2="518.5" y2="176.5" stroke="#000" stroke-width="1"/>
<line x1="525.5" y1="167.5" x2="525.5" y2="194.5" stroke="#000" stroke-width="1"/>
<rect x="522.5" y="176.5" width="6" height="9.0" fill="#ff0000" stroke="#000" stroke-width="1"/>
<line x1="535.5" y1="185.5" x2="535.5" y2="212.5" stroke="#000" stroke-width="1"/>
<rect x="532.5" y="185.5" width="6" height="9.0" fill="#ff0000" stroke="#000" stroke-width="1"/>
<line x1="545.5" y1="159.5" x2="545.5" y2="194.5" stroke="#000" stroke-width="1"/>
<rect x="542.5" y="167.5" width="6" height="27.0" fill="#90ee90" stroke="#000" stroke-width="1"/>
<line x1="555.5" y1="167.5" x2="555.5" y2="194.5" stroke="#000" stroke-width="1"/>
<line x1="552.5" y1="176.5" x2="558.5" y2="176.5" stroke="#000" stroke-width="1"/>
<line x1="565.5" y1="176.5" x2="565.5" y2="221.5" stroke="#000" stroke-width="1"/>
<rect x="562.5" y="176.5" width="6" height="36.0" fill="#ff0000" stroke="#000" stroke-width="1"/>
<line x1="575.5" y1="194.5" x2="575.5" y2="221.5" stroke="#000" stroke-width="1"/>
<rect x="572.5" y="194.5" width="6" height="18.0" fill="#90ee90" stroke="#000" stroke-width="1"/>
<line x1="585.5" y1="185.5" x2="585.5" y2="203.5" stroke="#000" stroke-width="1"/>
<rect x="582.5" y="185.5" width="6" height="18.0" fill="#90ee90" stroke="#000" stroke-width="1"/>
<line x1="595.5" y1="176.5" x2="595.5" y2="194.5" stroke="#000" stroke-width="1"/>
<rect x="592.5" y="185.5" width="6" height="9.0" fill="#ff0000" stroke="#000" stroke-width="1"/>
<line x1="605.5" y1="167.5" x2="605.5" y2="203.5" stroke="#000" stroke-width="1"/>
<rect x="602.5" y="185.5" width="6" height="9.0" fill="#ff0000" stroke="#000" stroke-width="1"/>
<line x1="615.5" y1="185.5" x2="615.5" y2="212.5" stroke="#000" stroke-width="1"/>
<line x1="612.5" y1="194.5" x2="618.5" y2="194.5" stroke="#000" stroke-width="1"/>
<line x1="625.5" y1="194.5" x2="625.5" y2="221.5" stroke="#000" stroke-width="1"/>
<rect x="622.5" y="194.5" width="6" height="9.0" fill="#ff0000" stroke="#000" stroke-width="1"/>
<line x1="635.5" y1="203.5" x2="635.5" y2="230.5" stroke="#000" stroke-width="1"/>
<rect x="632.5" y="203.5" width="6" height="18.0" fill="#ff0000" stroke="#000" stroke-width="1"/>
<line x1="645.5" y1="221.5" x2="645.5" y2="238.5" stroke="#000" stroke-width="1"/>
<rect x="642.5" y="221.5" width="6" height="9.0" fill="#ff0000" stroke="#000" stroke-width="1"/>
<line x1="655.5" y1="221.5" x2="655.5" y2="238.5" stroke="#000" stroke-width="1"/>
<rect x="652.5" y="230.5" width="6" height="8.0" fill="#ff0000" stroke="#000" stroke-width="1"/>
<line x1="665.5" y1="212.5" x2="665.5" y2="238.5" stroke="#000" stroke-width="1"/>
<rect x="662.5" y="221.5" width="6" height="17.0" fill="#90ee90" stroke="#000" stroke-width="1"/>
<line x1="675.5" y1="221.5" x2="675.5" y2="238.5" stroke="#000" stroke-width="1"/>
<rect x="672.5" y="221.5" width="6" height="9.0" fill="#ff0000" stroke="#000" stroke-width="1"/>
<line x1="685.5" y1="230.5" x2="685.5" y2="256.5" stroke="#000" stroke-width="1"/>
<rect x="682.5" y="230.5" width="6" height="17.0" fill="#ff0000" stroke="#000" stroke-width="1"/>
<line x1="695.5" y1="230.5" x2="695.5" y2="247.5" stroke="#000" stroke-width="1"/>
<rect x="692.5" y="230.5" width="6" height="17.0" fill="#90ee90" stroke="#000" stroke-width="1"/>
<line x1="705.5" y1="230.5" x2="705.5" y2="265.5" stroke="#000" stroke-width="1"/>
<rect x="702.5" y="230.5" width="6" height="26.0" fill="#ff0000" stroke="#000" stroke-width="1"/>
<line x1="715.5" y1="247.5" x2="715.5" y2="265.5" stroke="#000" stroke-width="1"/>
<rect x="712.5" y="247.5" width="6" height="9.0" fill="#90ee90" stroke="#000" stroke-width="1"/>
<line x1="725.5" y1="247.5" x2="725.5" y2="265.5" stroke="#000" stroke-width="1"/>
<line x1="722.5" y1="247.5" x2="728.5" y2="247.5" stroke="#000" stroke-width="1"/>
<line x1="735.5" y1="238.5" x2="735.5" y2="256.5" stroke="#000" stroke-width="1"/>
<rect x="732.5" y="238.5" width="6" height="18.0" fill="#90ee90" stroke="#000" stroke-width="1"/>
<line x1="745.5" y1="238.5" x2="745.5" y2="274.5" stroke="#000" stroke-width="1"/>
<rect x="742.5" y="238.5" width="6" height="36.0" fill="#ff0000" stroke="#000" stroke-width="1"/>
<line x1="755.5" y1="256.5" x2="755.5" y2="292.5" stroke="#000" stroke-width="1"/>
<rect x="752.5" y="274.5" width="6" height="9.0" fill="#ff0000" stroke="#000" stroke-width="1"/>
<line x1="765.5" y1="256.5" x2="765.5" y2="283.5" stroke="#000" stroke-width="1"/>
<rect x="762.5" y="265.5" width="6" height="18.0" fill="#90ee90" stroke="#000" stroke-width="1"/>
<line x1="775.5" y1="265.5" x2="775.5" y2="283.5" stroke="#000" stroke-width="1"/>
<line x1="772.5" y1="265.5" x2="778.5" y2="265.5" stroke="#000" stroke-width="1"/>
<line x1="785.5" y1="265.5" x2="785.5" y2="309.5" stroke="#000" stroke-width="1"/>
<rect x="782.5" y="274.5" width="6" height="35.0" fill="#ff0000" stroke="#000" stroke-width="1"/>
<line x1="795.5" y1="309.5" x2="795.5" y2="327.5" stroke="#000" stroke-width="1"/>
<rect x="792.5" y="309.5" width="6" height="18.0" fill="#ff0000" stroke="#000" stroke-width="1"/>
<line x1="805.5" y1="292.5" x2="805.5" y2="327.5" stroke="#000" stroke-width="1"/>
<rect x="802.5" y="301.5" width="6" height="26.0" fill="#90ee90" stroke="#000" stroke-width="1"/>
<line x1="815.5" y1="274.5" x2="815.5" y2="309.5" stroke="#000" stroke-width="1"/>
<rect x="812.5" y="292.5" width="6" height="9.0" fill="#90ee90" stroke="#000" stroke-width="1"/>
<line x1="825.5" y1="256.5" x2="825.5" y2="292.5" stroke="#000" stroke-width="1"/>
<rect x="822.5" y="283.5" width="6" height="9.0" fill="#90ee90" stroke="#000" stroke-width="1"/>
<line x1="835.5" y1="274.5" x2="835.5" y2="292.5" stroke="#000" stroke-width="1"/>
<rect x="832.5" y="283.5" width="6" height="9.0" fill="#ff0000" stroke="#000" stroke-width="1"/>
<line x1="845.5" y1="283.5" x2="845.5" y2="309.5" stroke="#000" stroke-width="1"/>
<rect x="842.5" y="292.5" width="6" height="9.0" fill="#ff0000" stroke="#000" stroke-width="1"/>
<line x1="855.5" y1="301.5" x2="855.5" y2="318.5" stroke="#000" stroke-width="1"/>
<rect x="852.5" y="301.5" width="6" height="8.0" fill="#ff0000" stroke="#000" stroke-width="1"/>
<line x1="865.5" y1="301.5" x2="865.5" y2="336.5" stroke="#000" stroke-width="1"/>
<rect x="862.5" y="301.5" width="6" height="8.0" fill="#90ee90" stroke="#000" stroke-width="1"/>
<line x1="875.5" y1="274.5" x2="875.5" y2="301.5" stroke="#000" stroke-width="1"/>
<rect x="872.5" y="283.5" width="6" height="18.0" fill="#90ee90" stroke="#000" stroke-width="1"/>
<line x1="885.5" y1="274.5" x2="885.5" y2="283.5" stroke="#000" stroke-width="1"/>
<line x1="882.5" y1="283.5" x2="888.5" y2="283.5" stroke="#000" stroke-width="1"/>
<line x1="895.5" y1="230.5" x2="895.5" y2="283.5" stroke="#000" stroke-width="1"/>
<rect x="892.5" y="238.5" width="6" height="45.0" fill="#90ee90" stroke="#000" stroke-width="1"/>
<line x1="905.5" y1="230.5" x2="905.5" y2="265.5" stroke="#000" stroke-width="1"/>
<line x1="902.5" y1="238.5" x2="908.5" y2="238.5" stroke="#000" stroke-width="1"/>
<line x1="915.5" y1="238.5" x2="915.5" y2="283.5" stroke="#000" stroke-width="1"/>
<rect x="912.5" y="238.5" width="6" height="27.0" fill="#ff0000" stroke="#000" stroke-width="1"/>
<line x1="925.5" y1="247.5" x2="925.5" y2="283.5" stroke="#000" stroke-width="1"/>
<rect x="922.5" y="265.5" width="6" height="18.0" fill="#ff0000" stroke="#000" stroke-width="1"/>
<line x1="935.5" y1="283.5" x2="935.5" y2="327.5" stroke="#000" stroke-width="1"/>
<rect x="932.5" y="283.5" width="6" height="35.0" fill="#ff0000" stroke="#000" stroke-width="1"/>
<line x1="945.5" y1="301.5" x2="945.5" y2="336.5" stroke="#000" stroke-width="1"/>
<rect x="942.5" y="318.5" width="6" height="18.0" fill="#ff0000" stroke="#000" stroke-width="1"/>
<line x1="955.5" y1="309.5" x2="955.5" y2="336.5" stroke="#000" stroke-width="1"/>
<rect x="952.5" y="327.5" width="6" height="9.0" fill="#90ee90" stroke="#000" stroke-width="1"/>
<line x1="965.5" y1="318.5" x2="965.5" y2="345.5" stroke="#000" stroke-width="1"/>
<rect x="962.5" y="327.5" width="6" height="18.0" fill="#ff0000" stroke="#000" stroke-width="1"/>
<line x1="975.5" y1="283.5" x2="975.5" y2="345.5" stroke="#000" stroke-width="1"/>
<rect x="972.5" y="292.5" width="6" height="53.0" fill="#90ee90" stroke="#000" stroke-width="1"/>
<line x1="985.5" y1="274.5" x2="985.5" y2="318.5" stroke="#000" stroke-width="1"/>
<rect x="982.5" y="292.5" width="6" height="9.0" fill="#ff0000" stroke="#000" stroke-width="1"/>
<line x1="995.5" y1="265.5" x2="995.5" y2="309.5" stroke="#000" stroke-width="1"/>
<rect x="992.5" y="283.5" width="6" height="18.0" fill="#90ee90" stroke="#000" stroke-width="1"/>
<line x1="1005.5" y1="274.5" x2="1005.5" y2="327.5" stroke="#000" stroke-width="1"/>
<rect x="1002.5" y="283.5" width="6" height="26.0" fill="#ff0000" stroke="#000" stroke-width="1"/>
<line x1="1015.5" y1="265.5" x2="1015.5" y2="318.5" stroke="#000" stroke-width="1"/>
<rect x="1012.5" y="274.5" width="6" height="35.0" fill="#90ee90" stroke="#000" stroke-width="1"/>
<line x1="1025.5" y1="265.5" x2="1025.5" y2="301.5" stroke="#000" stroke-width="1"/>
<rect x="1022.5" y="265.5" width="6" height="9.0" fill="#90ee90" stroke="#000" stroke-width="1"/>
<line x1="1035.5" y1="230.5" x2="1035.5" y2="265.5" stroke="#000" stroke-width="1"/>
<rect x="1032.5" y="238.5" width="6" height="27.0" fill="#90ee90" stroke="#000" stroke-width="1"/>
<line x1="1045.5" y1="238.5" x2="1045.5" y2="265.5" stroke="#000" stroke-width="1"/>
<rect x="1042.5" y="238.5" width="6" height="9.0" fill="#ff0000" stroke="#000" stroke-width="1"/>
<line x1="1055.5" y1="230.5" x2="1055.5" y2="274.5" stroke="#000" stroke-width="1"/>
<rect x="1052.5" y="230.5" width="6" height="17.0" fill="#90ee90" stroke="#000" stroke-width="1"/>
<line x1="1065.5" y1="230.5" x2="1065.5" y2="247.5" stroke="#000" stroke-width="1"/>
<rect x="1062.5" y="230.5" width="6" height="17.0" fill="#ff0000" stroke="#000" stroke-width="1"/>
<line x1="1075.5" y1="212.5" x2="1075.5" y2="256.5" stroke="#000" stroke-width="1"/>
<rect x="1072.5" y="221.5" width="6" height="26.0" fill="#90ee90" stroke="#000" stroke-width="1"/>
<line x1="1085.5" y1="212.5" x2="1085.5" y2="247.5" stroke="#000" stroke-width="1"/>
<rect x="1082.5" y="212.5" width="6" height="9.0" fill="#90ee90" stroke="#000" stroke-width="1"/>
<line x1="1095.5" y1="203.5" x2="1095.5" y2="247.5" stroke="#000" stroke-width="1"/>
<rect x="1092.5" y="203.5" width="6" height="9.0" fill="#90ee90" stroke="#000" stroke-width="1"/>
<line x1="1105.5" y1="203.5" x2="1105.5" y2="230.5" stroke="#000" stroke-width="1"/>
<rect x="1102.5" y="203.5" width="6" height="18.0" fill="#ff0000" stroke="#000" stroke-width="1"/>
<line x1="1115.5" y1="194.5" x2="1115.5" y2="221.5" stroke="#000" stroke-width="1"/>
<rect x="1112.5" y="212.5" width="6" height="9.0" fill="#90ee90" stroke="#000" stroke-width="1"/>
<line x1="1125.5" y1="176.5" x2="1125.5" y2="212.5" stroke="#000" stroke-width="1"/>
<rect x="1122.5" y="194.5" width="6" height="18.0" fill="#90ee90" stroke="#000" stroke-width="1"/>
<line x1="1135.5" y1="176.5" x2="1135.5" y2="212.5" stroke="#000" stroke-width="1"/>
<rect x="1132.5" y="185.5" width="6" height="9.0" fill="#90ee90" stroke="#000" stroke-width="1"/>
<line x1="1145.5" y1="176.5" x2="1145.5" y2="203.5" stroke="#000" stroke-width="1"/>
<rect x="1142.5" y="176.5" width="6" height="9.0" fill="#90ee90" stroke="#000" stroke-width="1"/>
<line x1="1155.5" y1="167.5" x2="1155.5" y2="230.5" stroke="#000" stroke-width="1"/>
<rect x="1152.5" y="167.5" width="6" height="9.0" fill="#90ee90" stroke="#000" stroke-width="1"/>
<line x1="1165.5" y1="167.5" x2="1165.5" y2="230.5" stroke="#000" stroke-width="1"/>
<rect x="1162.5" y="167.5" width="6" height="63.0" fill="#ff0000" stroke="#000" stroke-width="1"/>
<line x1="1175.5" y1="230.5" x2="1175.5" y2="292.5" stroke="#000" stroke-width="1"/>
<rect x="1172.5" y="230.5" width="6" height="53.0" fill="#ff0000" stroke="#000" stroke-width="1"/>
<line x1="1185.5" y1="230.5" x2="1185.5" y2="292.5" stroke="#000" stroke-width="1"/>
<rect x="1182.5" y="230.5" width="6" height="53.0" fill="#90ee90" stroke="#000" stroke-width="1"/>
<line x1="1195.5" y1="194.5" x2="1195.5" y2="230.5" stroke="#000" stroke-width="1"/>
<rect x="1192.5" y="203.5" width="6" height="27.0" fill="#90ee90" stroke="#000" stroke-width="1"/>
<line x1="1205.5" y1="159.5" x2="1205.5" y2="194.5" stroke="#000" stroke-width="1"/>
<rect x="1202.5" y="159.5" width="6" height="35.0" fill="#90ee90" stroke="#000" stroke-width="1"/>
<line x1="1215.5" y1="150.5" x2="1215.5" y2="176.5" stroke="#000" stroke-width="1"/>
<rect x="1212.5" y="150.5" width="6" height="17.0" fill="#ff0000" stroke="#000" stroke-width="1"/>
<line x1="1225.5" y1="150.5" x2="1225.5" y2="185.5" stroke="#000" stroke-width="1"/>
<rect x="1222.5" y="167.5" width="6" height="18.0" fill="#ff0000" stroke="#000" stroke-width="1"/>
<line x1="1235.5" y1="176.5" x2="1235.5" y2="203.5" stroke="#000" stroke-width="1"/>
<rect x="1232.5" y="185.5" width="6" height="9.0" fill="#ff0000" stroke="#000" stroke-width="1"/>
<line x1="1245.5" y1="185.5" x2="1245.5" y2="230.5" stroke="#000" stroke-width="1"/>
<rect x="1242.5" y="194.5" width="6" height="36.0" fill="#ff0000" stroke="#000" stroke-width="1"/>
<line x1="1255.5" y1="176.5" x2="1255.5" y2="230.5" stroke="#000" stroke-width="1"/>
<rect x="1252.5" y="185.5" width="6" height="45.0" fill="#90ee90" stroke="#000" stroke-width="1"/>
<line x1="1265.5" y1="159.5" x2="1265.5" y2="185.5" stroke="#000" stroke-width="1"/>
<rect x="1262.5" y="176.5" width="6" height="9.0" fill="#90ee90" stroke="#000" stroke-width="1"/>
<line x1="1275.5" y1="167.5" x2="1275.5" y2="203.5" stroke="#000" stroke-width="1"/>
<rect x="1272.5" y="176.5" width="6" height="9.0" fill="#90ee90" stroke="#000" stroke-width="1"/>
<line x1="1285.5" y1="176.5" x2="1285.5" y2="212.5" stroke="#000" stroke-width="1"/>
<rect x="1282.5" y="176.5" width="6" height="27.0" fill="#ff0000" stroke="#000" stroke-width="1"/>
<line x1="1295.5" y1="203.5" x2="1295.5" y2="238.5" stroke="#000" stroke-width="1"/>
<rect x="1292.5" y="203.5" width="6" height="27.0" fill="#ff0000" stroke="#000" stroke-width="1"/>
<line x1="1305.5" y1="221.5" x2="1305.5" y2="247.5" stroke="#000" stroke-width="1"/>
<rect x="1302.5" y="221.5" width="6" height="9.0" fill="#90ee90" stroke="#000" stroke-width="1"/>
<line x1="1315.5" y1="221.5" x2="1315.5" y2="283.5" stroke="#000" stroke-width="1"/>
<rect x="1312.5" y="221.5" width="6" height="53.0" fill="#ff0000" stroke="#000" stroke-width="1"/>
<line x1="1325.5" y1="274.5" x2="1325.5" y2="301.5" stroke="#000" stroke-width="1"/>
<rect x="1322.5" y="274.5" width="6" height="9.0" fill="#ff0000" stroke="#000" stroke-width="1"/>
<line x1="1335.5" y1="274.5" x2="1335.5" y2="309.5" stroke="#000" stroke-width="1"/>
<line x1="1332.5" y1="283.5" x2="1338.5" y2="283.5" stroke="#000" stroke-width="1"/>
<line x1="1345.5" y1="256.5" x2="1345.5" y2="283.5" stroke="#000" stroke-width="1"/>
<rect x="1342.5" y="256.5" width="6" height="27.0" fill="#90ee90" stroke="#000" stroke-width="1"/>
<line x1="1355.5" y1="256.5" x2="1355.5" y2="292.5" stroke="#000" stroke-width="1"/>
<rect x="1352.5" y="256.5" width="6" height="9.0" fill="#ff0000" stroke="#000" stroke-width="1"/>
<line x1="1365.5" y1="265.5" x2="1365.5" y2="292.5" stroke="#000" stroke-width="1"/>
<rect x="1362.5" y="265.5" width="6" height="27.0" fill="#ff0000" stroke="#000" stroke-width="1"/>
<line x1="1375.5" y1="274.5" x2="1375.5" y2="309.5" stroke="#000" stroke-width="1"/>
<line x1="1372.5" y1="292.5" x2="1378.5" y2="292.5" stroke="#000" stroke-width="1"/>
<line x1="1385.5" y1="247.5" x2="1385.5" y2="292.5" stroke="#000" stroke-width="1"/>
<rect x="1382.5" y="247.5" width="6" height="45.0" fill="#90ee90" stroke="#000" stroke-width="1"/>
<line x1="1395.5" y1="238.5" x2="1395.5" y2="265.5" stroke="#000" stroke-width="1"/>
<rect x="1392.5" y="247.5" width="6" height="9.0" fill="#ff0000" stroke="#000" stroke-width="1"/>
<line x1="1405.5" y1="247.5" x2="1405.5" y2="274.5" stroke="#000" stroke-width="1"/>
<line x1="1402.5" y1="256.5" x2="1408.5" y2="256.5" stroke="#000" stroke-width="1"/>
<line x1="1415.5" y1="238.5" x2="1415.5" y2="265.5" stroke="#000" stroke-width="1"/>
<line x1="1412.5" y1="256.5" x2="1418.5" y2="256.5" stroke="#000" stroke-width="1"/>
<line x1="1425.5" y1="238.5" x2="1425.5" y2="265.5" stroke="#000" stroke-width="1"/>
<line x1="1422.5" y1="256.5" x2="1428.5" y2="256.5" stroke="#000" stroke-width="1"/>
<line x1="1435.5" y1="247.5" x2="1435.5" y2="265.5" stroke="#000" stroke-width="1"/>
<rect x="1432.5" y="256.5" width="6" height="9.0" fill="#90ee90" stroke="#000" stroke-width="1"/>
<line x1="1445.5" y1="247.5" x2="1445.5" y2="292.5" stroke="#000" stroke-width="1"/>
<rect x="1442.5" y="247.5" width="6" height="45.0" fill="#ff0000" stroke="#000" stroke-width="1"/>
<line x1="1455.5" y1="265.5" x2="1455.5" y2="292.5" stroke="#000" stroke-width="1"/>
<rect x="1452.5" y="274.5" width="6" height="18.0" fill="#90ee90" stroke="#000" stroke-width="1"/>
<line x1="1465.5" y1="256.5" x2="1465.5" y2="292.5" stroke="#000" stroke-width="1"/>
<rect x="1462.5" y="274.5" width="6" height="18.0" fill="#ff0000" stroke="#000" stroke-width="1"/>
<line x1="1475.5" y1="283.5" x2="1475.5" y2="327.5" stroke="#000" stroke-width="1"/>
<rect x="1472.5" y="283.5" width="6" height="44.0" fill="#ff0000" stroke="#000" stroke-width="1"/>
<line x1="1485.5" y1="309.5" x2="1485.5" y2="380.5" stroke="#000" stroke-width="1"/>
<rect x="1482.5" y="327.5" width="6" height="36.0" fill="#ff0000" stroke="#000" stroke-width="1"/>
<line x1="1495.5" y1="363.5" x2="1495.5" y2="416.5" stroke="#000" stroke-width="1"/>
<rect x="1492.5" y="363.5" width="6" height="35.0" fill="#ff0000" stroke="#000" stroke-width="1"/>
<line x1="1505.5" y1="345.5" x2="1505.5" y2="398.5" stroke="#000" stroke-width="1"/>
<rect x="1502.5" y="345.5" width="6" height="53.0" fill="#90ee90" stroke="#000" stroke-width="1"/>
<polyline points="25.4,479.0 34.7,466.4 54.5,463.8 66.1,473.0 87.5,501.1 99.1,516.0 125.5,539.1 150.3,502.8 155.3,491.2 165.2,479.6 175.1,471.4 185.0,468.1 196.6,477.3 204.8,475.7 214.7,470.4 226.3,480.3 235.2,479.0 246.1,470.4 256.0,466.4 265.9,486.3 274.9,482.9 284.8,489.6 292.4,504.4 299.0,512.7 307.2,504.4 315.5,492.2 321.1,504.4 330.4,516.0 340.3,504.4 345.2,481.3 355.1,490.2 358.4,504.4 379.9,525.9 409.6,504.4 414.6,489.6 425.5,480.3 435.4,499.5 445.3,486.9 452.6,504.4 462.5,511.0 474.1,502.8 488.9,512.7 508.8,519.3 535.2,511.0 544.6,496.8 549.6,503.4 566.1,519.3 585.9,516.0 597.5,503.4 605.1,502.1 625.5,522.6 645.4,539.1 655.3,538.4 665.2,520.9 675.1,522.6 685.0,530.8 694.9,520.9 704.8,535.1 715.4,535.1 725.3,528.5 735.2,511.7 745.1,535.8 755.0,545.1 764.9,527.5 774.9,526.6 784.8,545.1 795.0,554.3 804.6,529.2 825.4,498.8 835.3,502.8 855.1,524.2 865.0,523.3 875.0,483.6 884.9,479.6 894.8,454.9 904.7,461.5 914.6,483.6 924.5,494.5 935.4,524.2 946.0,530.8 955.2,528.5 965.1,530.8 975.1,511.0 985.0,505.4 995.5,495.5 1004.8,502.8 1015.9,481.3 1035.7,457.2 1045.3,471.4 1056.2,474.7 1066.1,478.7 1076.0,476.3 1085.9,477.3 1095.8,476.3 1105.7,477.3 1115.6,473.0 1125.5,464.1 1135.4,469.1 1145.4,471.4 1155.3,479.6 1165.2,504.4 1175.1,559.6 1185.7,532.5 1195.6,499.5 1205.5,473.0 1215.4,475.3 1225.3,484.6 1235.2,496.2 1245.1,509.4 1255.0,497.2 1264.9,485.3 1274.9,493.5 1284.8,512.7 1295.0,539.1 1304.6,536.5 1315.5,544.1 1325.4,546.4 1335.3,535.8 1345.2,519.3 1355.1,518.3 1365.0,520.3 1375.0,523.6 1384.9,498.8 1395.4,483.9 1405.4,483.9 1415.3,478.7 1425.2,482.9 1435.4,488.9 1445.3,518.3 1455.2,516.6 1465.1,521.9 1475.1,554.0 1485.0,558.3 1495.5,549.0" fill="none" stroke="#ffa500" stroke-width="1.05" shape-rendering="geometricPrecision"/>
<line x1="9" y1="636.5" x2="1512" y2="636.5" stroke="#000" stroke-width="1"/>
<rect x="23.5" y="621.0" width="3.5" height="15.5" fill="#0000ff"/>
<rect x="33.5" y="605.7" width="3.5" height="30.8" fill="#0000ff"/>
<rect x="43.5" y="602.0" width="3.5" height="34.5" fill="#0000ff"/>
<rect x="53.5" y="592.5" width="3.5" height="44.0" fill="#0000ff"/>
<rect x="63.5" y="602.0" width="3.5" height="34.5" fill="#0000ff"/>
<rect x="73.5" y="609.0" width="3.5" height="27.5" fill="#0000ff"/>
<rect x="653.5" y="636.5" width="3.5" height="15.1" fill="#0000ff"/>
<rect x="663.5" y="636.5" width="3.5" height="8.4" fill="#0000ff"/>
<rect x="673.5" y="636.5" width="3.5" height="12.3" fill="#0000ff"/>
<rect x="683.5" y="636.5" width="3.5" height="18.2" fill="#0000ff"/>
<rect x="693.5" y="636.5" width="3.5" height="8.4" fill="#0000ff"/>
<rect x="703.5" y="636.5" width="3.5" height="18.2" fill="#0000ff"/>
<rect x="713.5" y="636.5" width="3.5" height="15.1" fill="#0000ff"/>
<rect x="723.5" y="636.5" width="3.5" height="12.3" fill="#0000ff"/>
<rect x="733.5" y="636.5" width="3.5" height="8.4" fill="#0000ff"/>
<rect x="743.5" y="636.5" width="3.5" height="22.4" fill="#0000ff"/>
<rect x="753.5" y="636.5" width="3.5" height="22.4" fill="#0000ff"/>
<rect x="763.5" y="636.5" width="3.5" height="15.1" fill="#0000ff"/>
<rect x="773.5" y="636.5" width="3.5" height="15.1" fill="#0000ff"/>
<rect x="783.5" y="636.5" width="3.5" height="28.0" fill="#0000ff"/>
<rect x="793.5" y="636.5" width="3.5" height="35.0" fill="#0000ff"/>
<rect x="803.5" y="636.5" width="3.5" height="22.4" fill="#0000ff"/>
<rect x="813.5" y="636.5" width="3.5" height="18.2" fill="#0000ff"/>
<rect x="823.5" y="636.5" width="3.5" height="15.1" fill="#0000ff"/>
<rect x="833.5" y="636.5" width="3.5" height="15.1" fill="#0000ff"/>
<rect x="843.5" y="636.5" width="3.5" height="18.2" fill="#0000ff"/>
<rect x="853.5" y="636.5" width="3.5" height="22.4" fill="#0000ff"/>
<rect x="863.5" y="636.5" width="3.5" height="15.1" fill="#0000ff"/>
<rect x="873.5" y="636.5" width="3.5" height="8.4" fill="#0000ff"/>
<rect x="883.5" y="636.5" width="3.5" height="8.4" fill="#0000ff"/>
<rect x="893.5" y="628.7" width="3.5" height="7.8" fill="#0000ff"/>
<rect x="903.5" y="628.7" width="3.5" height="7.8" fill="#0000ff"/>
<rect x="913.5" y="636.5" width="3.5" height="2.0" fill="#0000ff"/>
<rect x="923.5" y="636.5" width="3.5" height="8.4" fill="#0000ff"/>
<rect x="933.5" y="636.5" width="3.5" height="22.4" fill="#0000ff"/>
<rect x="943.5" y="636.5" width="3.5" height="25.2" fill="#0000ff"/>
<rect x="953.5" y="636.5" width="3.5" height="22.4" fill="#0000ff"/>
<rect x="963.5" y="636.5" width="3.5" height="25.2" fill="#0000ff"/>
<rect x="973.5" y="636.5" width="3.5" height="5.3" fill="#0000ff"/>
<rect x="983.5" y="636.5" width="3.5" height="8.4" fill="#0000ff"/>
<rect x="993.5" y="636.5" width="3.5" height="2.0" fill="#0000ff"/>
<rect x="1003.5" y="636.5" width="3.5" height="12.3" fill="#0000ff"/>
<rect x="1023.5" y="632.1" width="3.5" height="4.4" fill="#0000ff"/>
<rect x="1033.5" y="621.7" width="3.5" height="14.8" fill="#0000ff"/>
<rect x="1043.5" y="625.9" width="3.5" height="10.6" fill="#0000ff"/>
<rect x="1053.5" y="618.9" width="3.5" height="17.6" fill="#0000ff"/>
<rect x="1063.5" y="628.7" width="3.5" height="7.8" fill="#0000ff"/>
<rect x="1073.5" y="618.9" width="3.5" height="17.6" fill="#0000ff"/>
<rect x="1083.5" y="616.1" width="3.5" height="20.4" fill="#0000ff"/>
<rect x="1093.5" y="616.1" width="3.5" height="20.4" fill="#0000ff"/>
<rect x="1103.5" y="621.7" width="3.5" height="14.8" fill="#0000ff"/>
<rect x="1113.5" y="618.9" width="3.5" height="17.6" fill="#0000ff"/>
<rect x="1123.5" y="611.9" width="3.5" height="24.6" fill="#0000ff"/>
<rect x="1133.5" y="611.9" width="3.5" height="24.6" fill="#0000ff"/>
<rect x="1143.5" y="609.1" width="3.5" height="27.4" fill="#0000ff"/>
<rect x="1153.5" y="609.1" width="3.5" height="27.4" fill="#0000ff"/>
<rect x="1163.5" y="632.1" width="3.5" height="4.4" fill="#0000ff"/>
<rect x="1173.5" y="636.5" width="3.5" height="15.1" fill="#0000ff"/>
<rect x="1183.5" y="632.1" width="3.5" height="4.4" fill="#0000ff"/>
<rect x="1193.5" y="621.7" width="3.5" height="14.8" fill="#0000ff"/>
<rect x="1203.5" y="605.8" width="3.5" height="30.7" fill="#0000ff"/>
<rect x="1213.5" y="611.9" width="3.5" height="24.6" fill="#0000ff"/>
<rect x="1223.5" y="618.9" width="3.5" height="17.6" fill="#0000ff"/>
<rect x="1233.5" y="621.7" width="3.5" height="14.8" fill="#0000ff"/>
<rect x="1253.5" y="621.7" width="3.5" height="14.8" fill="#0000ff"/>
<rect x="1263.5" y="618.9" width="3.5" height="17.6" fill="#0000ff"/>
<rect x="1273.5" y="618.9" width="3.5" height="17.6" fill="#0000ff"/>
<rect x="1283.5" y="628.7" width="3.5" height="7.8" fill="#0000ff"/>
<rect x="1293.5" y="636.5" width="3.5" height="2.0" fill="#0000ff"/>
<rect x="1313.5" y="636.5" width="3.5" height="18.2" fill="#0000ff"/>
<rect x="1323.5" y="636.5" width="3.5" height="18.2" fill="#0000ff"/>
<rect x="1333.5" y="636.5" width="3.5" height="18.2" fill="#0000ff"/>
<rect x="1343.5" y="636.5" width="3.5" height="8.4" fill="#0000ff"/>
<rect x="1353.5" y="636.5" width="3.5" height="12.3" fill="#0000ff"/>
<rect x="1363.5" y="636.5" width="3.5" height="18.2" fill="#0000ff"/>
<rect x="1373.5" y="636.5" width="3.5" height="18.2" fill="#0000ff"/>
<rect x="1383.5" y="636.5" width="3.5" height="2.0" fill="#0000ff"/>
<rect x="1393.5" y="636.5" width="3.5" height="5.3" fill="#0000ff"/>
<rect x="1403.5" y="636.5" width="3.5" height="5.3" fill="#0000ff"/>
<rect x="1413.5" y="636.5" width="3.5" height="5.3" fill="#0000ff"/>
<rect x="1423.5" y="636.5" width="3.5" height="5.3" fill="#0000ff"/>
<rect x="1433.5" y="636.5" width="3.5" height="2.0" fill="#0000ff"/>
<rect x="1443.5" y="636.5" width="3.5" height="15.1" fill="#0000ff"/>
<rect x="1453.5" y="636.5" width="3.5" height="8.4" fill="#0000ff"/>
<rect x="1463.5" y="636.5" width="3.5" height="15.1" fill="#0000ff"/>
<rect x="1473.5" y="636.5" width="3.5" height="25.2" fill="#0000ff"/>
<rect x="1483.5" y="636.5" width="3.5" height="38.3" fill="#0000ff"/>
<rect x="1493.5" y="636.5" width="3.5" height="48.1" fill="#0000ff"/>
<polyline points="25.0,583.2 75.0,583.5 655.4,593.8 665.2,594.6 695.9,596.0 723.9,596.6 763.0,596.6 775.6,598.0 785.4,596.6 796.6,597.4 835.7,597.4 858.1,598.5 886.0,599.4 902.8,598.0 919.6,597.1 944.7,596.6 955.9,597.7 964.3,597.7 986.7,595.2 1003.4,594.6 1045.4,594.6 1056.6,593.8 1064.9,594.6 1095.2,593.2 1106.3,594.6 1145.5,594.6 1165.1,592.4 1187.4,590.1 1204.2,590.1 1221.0,591.5 1243.3,591.5 1260.1,590.1 1276.9,591.5 1310.4,591.0 1321.6,590.1 1338.4,591.5 1391.5,591.5 1405.5,592.4 1433.4,593.2 1475.4,593.2 1486.6,591.0 1494.9,591.0" fill="none" stroke="#ff0000" stroke-width="2.2" shape-rendering="geometricPrecision"/>
<polyline points="25.0,688.0 75.0,688.0 655.4,678.5 670.8,677.1 695.9,676.2 723.9,675.4 763.0,675.4 777.0,674.3 785.4,675.7 796.6,674.8 846.9,674.3 863.7,673.4 886.0,672.9 902.8,674.0 930.7,674.8 944.7,676.2 961.5,674.8 986.7,676.8 1003.4,677.6 1042.6,677.6 1056.6,679.0 1064.9,677.6 1095.2,678.5 1106.3,677.1 1142.7,677.1 1165.1,679.6 1184.6,681.3 1207.0,681.3 1221.0,679.9 1248.9,680.4 1262.9,681.3 1282.5,679.9 1310.4,681.3 1321.6,681.8 1338.4,679.9 1394.3,680.4 1405.5,679.0 1433.4,677.6 1472.6,677.6 1486.6,680.4 1494.9,680.4" fill="none" stroke="#008000" stroke-width="2.2" shape-rendering="geometricPrecision"/>
<line x1="9" y1="721" x2="1512" y2="721" stroke="#9acd32" stroke-width="1"/>
<line x1="9" y1="797.5" x2="1512" y2="797.5" stroke="#9400d3" stroke-width="1.5"/>
<line x1="9" y1="861.5" x2="1512" y2="861.5" stroke="#9acd32" stroke-width="1"/>
<line x1="9" y1="927.5" x2="1512" y2="927.5" stroke="#9400d3" stroke-width="1.5"/>
<polyline points="25.2,751.0 35.0,740.0 45.5,731.2 55.2,721.8 66.4,724.2 77.0,731.2 655.4,792.3 665.2,784.4 674.9,784.4 685.3,789.5 695.1,782.5 705.1,786.7 715.5,783.9 725.3,783.0 735.6,778.3 745.4,786.7 755.2,792.3 765.8,786.7 775.6,783.0 785.4,793.7 795.2,801.5 805.5,792.3 815.3,785.3 825.1,777.2 835.7,776.0 845.5,779.7 855.3,783.0 865.0,779.7 875.4,770.5 885.2,765.1 895.0,748.1 905.0,739.7 915.4,748.1 925.2,757.3 935.5,771.3 945.3,782.5 955.3,784.4 965.1,789.5 975.5,773.2 985.3,768.5 995.0,760.1 1005.4,763.7 1015.2,756.5 1025.2,750.3 1035.0,741.4 1045.4,740.5 1055.2,736.3 1064.9,741.4 1075.0,736.3 1075.3,736.9 1085.1,732.1 1095.2,728.8 1104.9,734.1 1115.0,734.1 1125.1,730.2 1135.1,727.1 1145.5,723.8 1155.3,719.6 1165.1,741.4 1175.1,764.3 1185.2,760.9 1195.0,755.4 1205.0,745.3 1215.1,741.9 1224.9,745.3 1234.9,748.9 1245.0,758.1 1255.1,753.7 1265.1,750.3 1274.9,748.4 1285.0,754.5 1295.0,762.9 1305.1,765.7 1314.9,776.0 1325.0,783.0 1335.0,787.5 1345.1,780.5 1355.2,778.3 1364.9,783.3 1375.0,785.3 1385.1,772.1 1395.1,767.9 1405.2,766.3 1415.3,764.9 1425.0,764.3 1435.1,764.9 1445.2,776.0 1455.2,774.1 1465.0,779.1 1475.1,788.9 1485.2,799.2 1494.9,808.2" fill="none" stroke="#ffa500" stroke-width="1.05" shape-rendering="geometricPrecision"/>
<polyline points="25.2,748.7 35.0,728.8 45.5,722.5 55.2,712.7 64.7,730.2 77.0,738.0 655.4,798.4 665.2,777.7 674.9,783.3 685.3,794.5 695.1,775.5 705.1,790.9 715.5,782.5 725.3,782.5 735.6,772.7 745.4,794.5 755.2,798.4 765.8,780.5 775.6,780.5 785.4,802.0 795.2,808.2 805.5,784.4 815.3,778.3 825.1,770.5 835.7,776.0 845.5,781.1 855.3,786.1 865.0,777.7 875.4,761.5 885.2,761.5 895.0,730.2 905.0,730.2 915.4,754.5 925.2,766.5 935.5,786.1 945.3,794.5 955.3,786.7 965.1,794.5 975.5,757.3 985.3,762.1 995.0,752.6 1005.4,767.1 1015.2,748.9 1025.2,744.7 1035.0,733.5 1045.4,739.1 1055.2,731.6 1064.9,744.2 1075.0,732.1 1075.3,732.1 1085.1,728.8 1095.2,725.7 1104.9,739.1 1115.0,734.9 1125.1,726.6 1135.1,722.4 1145.5,719.0 1155.3,715.4 1165.1,762.9 1175.1,786.1 1185.2,759.3 1195.0,749.8 1205.0,734.4 1215.1,739.1 1224.9,746.1 1234.9,751.7 1245.0,767.9 1255.1,749.8 1265.1,746.1 1274.9,746.1 1285.0,759.3 1295.0,772.1 1305.1,767.1 1314.9,787.2 1325.0,790.0 1335.0,790.0 1345.1,773.2 1355.2,777.7 1364.9,788.1 1375.0,788.1 1385.1,759.3 1395.1,764.3 1405.2,764.3 1415.3,764.3 1425.0,764.3 1435.1,764.3 1445.2,787.2 1455.2,772.7 1465.0,781.6 1475.1,797.8 1485.2,809.0 1494.9,817.4" fill="none" stroke="#008000" stroke-width="1.3" shape-rendering="geometricPrecision"/>
<polyline points="25.2,891.0 35.0,874.6 45.5,857.0 55.2,843.0 66.4,844.9 77.0,855.3 655.4,941.2 665.2,937.0 674.9,937.0 685.3,933.7 695.1,931.4 705.1,931.4 715.5,928.1 725.3,932.8 735.6,926.4 745.4,932.8 755.2,936.5 765.8,935.1 775.6,923.6 785.4,926.4 795.2,937.6 805.5,940.4 815.3,924.4 825.1,910.5 835.7,906.3 845.5,908.5 855.3,918.3 865.0,918.3 875.4,909.6 885.2,890.9 895.0,871.3 905.0,857.4 915.4,857.4 925.2,872.7 935.5,900.7 945.3,925.8 955.3,940.4 965.1,946.3 975.5,930.0 985.3,918.9 995.0,898.5 1005.4,904.0 1015.2,896.5 1025.2,890.3 1035.0,867.7 1045.4,860.1 1055.2,847.6 1064.9,850.4 1075.0,847.6 1075.3,847.6 1085.1,847.6 1095.2,841.4 1104.9,843.4 1115.0,848.1 1125.1,853.2 1135.1,850.9 1145.5,846.2 1155.3,841.4 1165.1,861.0 1175.1,895.1 1185.2,913.3 1195.0,902.1 1205.0,868.5 1215.1,854.6 1224.9,853.7 1234.9,864.3 1245.0,880.3 1255.1,880.3 1265.1,876.9 1274.9,862.1 1285.0,866.6 1295.0,881.1 1305.1,892.9 1314.9,910.5 1325.0,922.5 1335.0,934.2 1345.1,927.2 1355.2,921.1 1364.9,923.6 1375.0,931.4 1385.1,926.4 1395.1,917.5 1405.2,907.7 1415.3,908.5 1425.0,902.1 1435.1,894.5 1445.2,902.1 1455.2,902.1 1465.0,914.7 1475.1,922.5 1485.2,936.5 1494.9,941.2" fill="none" stroke="#ffa500" stroke-width="1.05" shape-rendering="geometricPrecision"/>
<polyline points="25.2,927.0 35.0,918.3 45.5,906.0 55.2,892.0 66.4,878.0 77.0,867.6 655.4,922.5 665.2,925.8 674.9,930.0 685.3,932.8 695.1,933.7 705.1,935.1 715.5,934.2 725.3,933.4 735.6,931.4 745.4,931.4 755.2,931.4 765.8,932.8 775.6,931.4 785.4,930.6 795.2,931.4 805.5,933.4 815.3,932.3 825.1,928.6 835.7,924.4 845.5,922.5 855.3,921.1 865.0,918.0 875.4,914.1 885.2,908.5 895.0,903.5 905.0,896.5 915.4,889.5 925.2,882.5 935.5,880.6 945.3,882.5 955.3,888.9 965.1,899.3 975.5,909.6 985.3,918.9 995.0,923.6 1005.4,923.6 1015.2,918.9 1025.2,912.4 1035.0,900.7 1045.4,890.1 1055.2,880.3 1064.9,872.2 1075.3,864.3 1085.1,858.8 1095.2,851.8 1104.9,848.4 1115.0,846.2 1125.1,847.6 1135.1,847.6 1145.5,847.0 1155.3,846.2 1165.1,849.0 1175.1,856.0 1185.2,864.9 1195.0,872.2 1205.0,875.0 1215.1,876.1 1224.9,878.3 1234.9,878.3 1245.0,876.1 1255.1,872.2 1265.1,868.5 1274.9,867.7 1285.0,869.4 1295.0,873.3 1305.1,876.9 1314.9,881.1 1325.0,887.3 1335.0,895.1 1345.1,904.9 1355.2,911.9 1364.9,918.0 1375.0,924.4 1385.1,925.8 1395.1,925.3 1405.2,922.5 1415.3,918.9 1425.0,916.1 1435.1,911.9 1445.2,907.7 1455.2,904.9 1465.0,904.0 1475.1,906.8 1485.2,911.3 1494.9,916.1" fill="none" stroke="#008000" stroke-width="1.3" shape-rendering="geometricPrecision"/>
<polyline points="25.2,1004.5 35.6,978.0 44.0,969.7 54.5,969.7 65.0,983.5 77.6,987.7 90.0,1000.0 125.0,1015.0 134.0,1032.6 142.6,1028.4 150.0,1010.0 200.0,1000.0 300.0,1000.0 350.0,1005.0 358.5,1029.6 364.8,1045.0 375.3,1055.6 385.7,1031.7 396.2,1031.7 405.0,1005.0 450.0,1005.0 457.0,1029.6 465.4,1047.2 471.7,1031.7 480.0,1010.0 488.5,1029.6 496.0,1046.4 505.2,1030.5 510.0,1015.0 515.7,1029.6 526.2,1045.0 536.7,1038.9 543.0,1029.6 550.0,1010.0 557.6,1029.6 565.2,1047.2 576.5,1030.5 585.0,1005.0 608.0,1005.0 616.4,1029.6 626.8,1034.7 635.2,1045.0 645.0,1046.7 655.4,1056.2 665.2,1036.6 674.9,1046.4 685.3,1047.3 695.1,1029.9 705.1,1048.1 715.5,1040.8 725.3,1040.8 735.6,1032.7 745.4,1056.2 755.2,1048.7 765.8,1029.9 775.6,1027.7 785.4,1056.2 795.2,1056.2 805.5,1034.7 815.3,1024.9 825.1,1016.5 835.7,1024.3 845.5,1029.1 855.3,1038.3 865.0,1024.9 875.4,1008.7 885.2,997.5 895.0,976.5 905.0,976.5 915.4,996.9 925.2,1012.3 935.5,1041.1 945.3,1056.2 955.3,1048.7 965.1,1056.2 975.5,1015.7 985.3,1022.1 995.0,1009.5 1005.4,1029.1 1015.2,1002.5 1025.2,995.5 1035.0,975.4 1045.4,982.1 1055.2,968.4 1064.9,982.1 1075.0,974.6 1075.3,973.2 1085.1,968.4 1095.2,968.4 1104.9,979.3 1115.0,980.7 1125.1,979.6 1135.1,974.6 1145.5,968.4 1155.3,968.4 1165.1,1017.9 1175.1,1049.5 1185.2,1012.3 1195.0,992.7 1205.0,968.4 1215.1,979.6 1224.9,989.9 1234.9,996.9 1245.0,1017.3 1255.1,989.9 1265.1,985.2 1274.9,985.2 1285.0,1001.1 1295.0,1017.3 1305.1,1012.9 1314.9,1045.3 1325.0,1045.3 1335.0,1041.7 1345.1,1027.7 1355.2,1031.9 1364.9,1045.3 1375.0,1045.3 1385.1,1020.7 1395.1,1025.5 1405.2,1023.5 1415.3,1021.5 1425.0,1012.3 1435.1,1003.9 1445.2,1038.0 1455.2,1012.9 1465.0,1034.7 1475.1,1056.2 1485.2,1045.3 1494.9,1047.3" fill="none" stroke="#ffa500" stroke-width="1.05" shape-rendering="geometricPrecision"/>
<line x1="9" y1="442.5" x2="1566" y2="442.5" stroke="#000" stroke-width="1"/>
<line x1="9" y1="571.5" x2="1566" y2="571.5" stroke="#000" stroke-width="1"/>
<line x1="9" y1="700.5" x2="1566" y2="700.5" stroke="#000" stroke-width="1"/>
<line x1="9" y1="829.5" x2="1566" y2="829.5" stroke="#000" stroke-width="1"/>
<line x1="9" y1="958.5" x2="1566" y2="958.5" stroke="#000" stroke-width="1"/>
<line x1="1512.5" y1="61" x2="1512.5" y2="1063" stroke="#000" stroke-width="1"/>
<line x1="9" y1="1062.5" x2="1513" y2="1062.5" stroke="#000" stroke-width="1"/>
<g font-family="Liberation Sans, sans-serif" font-size="11" fill="#000" text-rendering="geometricPrecision" shape-rendering="geometricPrecision">
<line x1="25.5" y1="1063" x2="25.5" y2="1069" stroke="#000"/>
<text x="24.5" y="1079" text-anchor="middle">21:25</text>
<line x1="85.5" y1="1063" x2="85.5" y2="1069" stroke="#000"/>
<text x="84.5" y="1079" text-anchor="middle">21:26</text>
<line x1="145.5" y1="1063" x2="145.5" y2="1069" stroke="#000"/>
<text x="144.5" y="1079" text-anchor="middle">21:27</text>
<line x1="205.5" y1="1063" x2="205.5" y2="1069" stroke="#000"/>
<text x="204.5" y="1079" text-anchor="middle">21:27</text>
<line x1="265.5" y1="1063" x2="265.5" y2="1069" stroke="#000"/>
<text x="264.5" y="1079" text-anchor="middle">21:28</text>
<line x1="325.5" y1="1063" x2="325.5" y2="1069" stroke="#000"/>
<text x="324.5" y="1079" text-anchor="middle">21:28</text>
<line x1="385.5" y1="1063" x2="385.5" y2="1069" stroke="#000"/>
<text x="384.5" y="1079" text-anchor="middle">21:28</text>
<line x1="445.5" y1="1063" x2="445.5" y2="1069" stroke="#000"/>
<text x="444.5" y="1079" text-anchor="middle">21:28</text>
<line x1="505.5" y1="1063" x2="505.5" y2="1069" stroke="#000"/>
<text x="504.5" y="1079" text-anchor="middle">21:28</text>
<line x1="565.5" y1="1063" x2="565.5" y2="1069" stroke="#000"/>
<text x="564.5" y="1079" text-anchor="middle">21:28</text>
<line x1="625.5" y1="1063" x2="625.5" y2="1069" stroke="#000"/>
<text x="624.5" y="1079" text-anchor="middle">21:28</text>
<line x1="685.5" y1="1063" x2="685.5" y2="1069" stroke="#000"/>
<text x="684.5" y="1079" text-anchor="middle">21:29</text>
<line x1="745.5" y1="1063" x2="745.5" y2="1069" stroke="#000"/>
<text x="744.5" y="1079" text-anchor="middle">21:29</text>
<line x1="805.5" y1="1063" x2="805.5" y2="1069" stroke="#000"/>
<text x="804.5" y="1079" text-anchor="middle">21:30</text>
<line x1="865.5" y1="1063" x2="865.5" y2="1069" stroke="#000"/>
<text x="864.5" y="1079" text-anchor="middle">21:31</text>
<line x1="925.5" y1="1063" x2="925.5" y2="1069" stroke="#000"/>
<text x="924.5" y="1079" text-anchor="middle">21:33</text>
<line x1="985.5" y1="1063" x2="985.5" y2="1069" stroke="#000"/>
<text x="984.5" y="1079" text-anchor="middle">21:38</text>
<line x1="1045.5" y1="1063" x2="1045.5" y2="1069" stroke="#000"/>
<text x="1044.5" y="1079" text-anchor="middle">21:43</text>
<line x1="1105.5" y1="1063" x2="1105.5" y2="1069" stroke="#000"/>
<text x="1104.5" y="1079" text-anchor="middle">21:52</text>
<line x1="1165.5" y1="1063" x2="1165.5" y2="1069" stroke="#000"/>
<text x="1164.5" y="1079" text-anchor="middle">21:58</text>
<line x1="1225.5" y1="1063" x2="1225.5" y2="1069" stroke="#000"/>
<text x="1224.5" y="1079" text-anchor="middle">22:05</text>
<line x1="1285.5" y1="1063" x2="1285.5" y2="1069" stroke="#000"/>
<text x="1284.5" y="1079" text-anchor="middle">22:16</text>
<line x1="1345.5" y1="1063" x2="1345.5" y2="1069" stroke="#000"/>
<text x="1344.5" y="1079" text-anchor="middle">22:28</text>
<line x1="1405.5" y1="1063" x2="1405.5" y2="1069" stroke="#000"/>
<text x="1404.5" y="1079" text-anchor="middle">22:46</text>
<line x1="1465.5" y1="1063" x2="1465.5" y2="1069" stroke="#000"/>
<text x="1464.5" y="1079" text-anchor="middle">23:21</text>
</g>
<g font-family="Liberation Sans, sans-serif" font-size="11" fill="#000" text-rendering="geometricPrecision">
<line x1="1512" y1="79.5" x2="1518" y2="79.5" stroke="#000"/>
<text x="1520" y="83.5">60,05</text>
<line x1="1512" y1="123.5" x2="1518" y2="123.5" stroke="#000"/>
<text x="1520" y="127.5">60,00</text>
<line x1="1512" y1="168.5" x2="1518" y2="168.5" stroke="#000"/>
<text x="1520" y="172.5">59,95</text>
<line x1="1512" y1="212.5" x2="1518" y2="212.5" stroke="#000"/>
<text x="1520" y="216.5">59,90</text>
<line x1="1512" y1="257.5" x2="1518" y2="257.5" stroke="#000"/>
<text x="1520" y="261.5">59,85</text>
<line x1="1512" y1="301.5" x2="1518" y2="301.5" stroke="#000"/>
<text x="1520" y="305.5">59,80</text>
<line x1="1512" y1="390.5" x2="1518" y2="390.5" stroke="#000"/>
<text x="1520" y="394.5">59,70</text>
<line x1="1512" y1="434.5" x2="1518" y2="434.5" stroke="#000"/>
<text x="1520" y="438.5">59,65</text>
<line x1="1512" y1="451.5" x2="1518" y2="451.5" stroke="#000"/>
<text x="1520" y="455.5">200</text>
<line x1="1512" y1="476.5" x2="1518" y2="476.5" stroke="#000"/>
<text x="1520" y="480.5">100</text>
<line x1="1512" y1="502.5" x2="1518" y2="502.5" stroke="#000"/>
<text x="1520" y="506.5">0</text>
<line x1="1512" y1="528.5" x2="1518" y2="528.5" stroke="#000"/>
<text x="1520" y="532.5">-100</text>
<line x1="1512" y1="553.5" x2="1518" y2="553.5" stroke="#000"/>
<text x="1520" y="557.5">-200</text>
<line x1="1512" y1="603.5" x2="1518" y2="603.5" stroke="#000"/>
<text x="1520" y="607.5">0,1</text>
<line x1="1512" y1="636.5" x2="1518" y2="636.5" stroke="#000"/>
<text x="1520" y="640.5">0</text>
<line x1="1512" y1="669.5" x2="1518" y2="669.5" stroke="#000"/>
<text x="1520" y="673.5">-0,1</text>
<line x1="1512" y1="741" x2="1518" y2="741" stroke="#000"/>
<text x="1520" y="745">60</text>
<line x1="1512" y1="779" x2="1518" y2="779" stroke="#000"/>
<text x="1520" y="783">40</text>
<line x1="1512" y1="816.5" x2="1518" y2="816.5" stroke="#000"/>
<text x="1520" y="820.5">20</text>
<line x1="1512" y1="840" x2="1518" y2="840" stroke="#000"/>
<text x="1520" y="844">100</text>
<line x1="1512" y1="895" x2="1518" y2="895" stroke="#000"/>
<text x="1520" y="899">50</text>
<line x1="1512" y1="950.5" x2="1518" y2="950.5" stroke="#000"/>
<text x="1520" y="954.5">0</text>
<line x1="1512" y1="968.5" x2="1518" y2="968.5" stroke="#000"/>
<text x="1520" y="972.5">0</text>
<line x1="1512" y1="1012.5" x2="1518" y2="1012.5" stroke="#000"/>
<text x="1520" y="1016.5">-50</text>
<line x1="1512" y1="1056.5" x2="1518" y2="1056.5" stroke="#000"/>
<text x="1520" y="1060.5">-100</text>
</g>
<g font-family="Liberation Sans, sans-serif" font-size="11" text-rendering="geometricPrecision">
<path d="M1513.5,96 L1519.5,89.5 L1549.5,89.5 L1549.5,102.5 L1519.5,102.5 Z" fill="#ffa500" stroke="#000" stroke-width="1.4" stroke-linejoin="miter" shape-rendering="geometricPrecision"/>
<text x="1521.5" y="100" fill="#000">60,03</text>
<path d="M1513.5,210 L1519.5,203.5 L1549.5,203.5 L1549.5,216.5 L1519.5,216.5 Z" fill="#0000ff" stroke="#000" stroke-width="1.4" stroke-linejoin="miter" shape-rendering="geometricPrecision"/>
<text x="1521.5" y="214" fill="#fff">59,90</text>
<path d="M1513.5,203.5 L1519.5,197.0 L1549.5,197.0 L1549.5,210.0 L1519.5,210.0 Z" fill="#ffa500" stroke="#000" stroke-width="1.4" stroke-linejoin="miter" shape-rendering="geometricPrecision"/>
<text x="1521.5" y="207.5" fill="#000">59,91</text>
<path d="M1513.5,290 L1519.5,283.5 L1549.5,283.5 L1549.5,296.5 L1519.5,296.5 Z" fill="#ffa500" stroke="#000" stroke-width="1.4" stroke-linejoin="miter" shape-rendering="geometricPrecision"/>
<text x="1521.5" y="294" fill="#000">59,81</text>
<path d="M1513.5,345 L1519.5,338.5 L1549.5,338.5 L1549.5,351.5 L1519.5,351.5 Z" fill="#000000" stroke="#000" stroke-width="1.4" stroke-linejoin="miter" shape-rendering="geometricPrecision"/>
<text x="1521.5" y="349" fill="#fff">59,75</text>
<path d="M1513.5,377 L1519.5,370.5 L1549.5,370.5 L1549.5,383.5 L1519.5,383.5 Z" fill="#ffa500" stroke="#000" stroke-width="1.4" stroke-linejoin="miter" shape-rendering="geometricPrecision"/>
<text x="1521.5" y="381" fill="#000">59,71</text>
<path d="M1513.5,549 L1519.5,542.5 L1559,542.5 L1559,555.5 L1519.5,555.5 Z" fill="#ffa500" stroke="#000" stroke-width="1.4" stroke-linejoin="miter" shape-rendering="geometricPrecision"/>
<text x="1521.5" y="553" fill="#000">-185,06</text>
<path d="M1513.5,591 L1519.5,584.5 L1550,584.5 L1550,597.5 L1519.5,597.5 Z" fill="#ff0000" stroke="#000" stroke-width="1.4" stroke-linejoin="miter" shape-rendering="geometricPrecision"/>
<text x="1521.5" y="595" fill="#fff">0,134</text>
<path d="M1513.5,685 L1519.5,678.5 L1547,678.5 L1547,691.5 L1519.5,691.5 Z" fill="#0000ff" stroke="#000" stroke-width="1.4" stroke-linejoin="miter" shape-rendering="geometricPrecision"/>
<text x="1521.5" y="689" fill="#fff">-0,13</text>
<path d="M1513.5,680 L1519.5,673.5 L1553,673.5 L1553,686.5 L1519.5,686.5 Z" fill="#008000" stroke="#000" stroke-width="1.4" stroke-linejoin="miter" shape-rendering="geometricPrecision"/>
<text x="1521.5" y="684" fill="#fff">-0,134</text>
<path d="M1513.5,817.5 L1519.5,811.0 L1549.5,811.0 L1549.5,824.0 L1519.5,824.0 Z" fill="#008000" stroke="#000" stroke-width="1.4" stroke-linejoin="miter" shape-rendering="geometricPrecision"/>
<text x="1521.5" y="821.5" fill="#fff">19,26</text>
<path d="M1513.5,808 L1519.5,801.5 L1549.5,801.5 L1549.5,814.5 L1519.5,814.5 Z" fill="#ffa500" stroke="#000" stroke-width="1.4" stroke-linejoin="miter" shape-rendering="geometricPrecision"/>
<text x="1521.5" y="812" fill="#000">24,22</text>
<path d="M1513.5,916.5 L1519.5,910.0 L1549.5,910.0 L1549.5,923.0 L1519.5,923.0 Z" fill="#008000" stroke="#000" stroke-width="1.4" stroke-linejoin="miter" shape-rendering="geometricPrecision"/>
<text x="1521.5" y="920.5" fill="#fff">30,48</text>
<path d="M1513.5,941 L1519.5,934.5 L1537,934.5 L1537,947.5 L1519.5,947.5 Z" fill="#ffa500" stroke="#000" stroke-width="1.4" stroke-linejoin="miter" shape-rendering="geometricPrecision"/>
<text x="1521.5" y="945" fill="#000">7,5</text>
<path d="M1513.5,1047 L1519.5,1040.5 L1538,1040.5 L1538,1053.5 L1519.5,1053.5 Z" fill="#ffa500" stroke="#000" stroke-width="1.4" stroke-linejoin="miter" shape-rendering="geometricPrecision"/>
<text x="1521.5" y="1051" fill="#000">-90</text>
</g>
<g font-family="Liberation Sans, sans-serif" font-size="11.1" fill="#000" text-rendering="geometricPrecision">
<text x="11" y="72">MT Signals Extreme Boll TS=3 TE=4 TW=1 ZS=0, MT Signals MT3 HILO Range Trader TS=1 TE=3 TW=1 ZS=0</text>
<text x="11" y="464">MT Signals Extreme CCI TS=4 TE=1 TW=1 ZS=0</text>
<text x="11" y="593">MT Signals MA Trend X TS=0 TE=0 TW=1 ZS=0</text>
<text x="11" y="722">MT Signals Extreme RSI TS=2 TE=1 TW=1 ZS=0</text>
<text x="11" y="851">MT Signals Extreme SS CCI TS=8 TE=1 TW=1 ZS=0</text>
<text x="11" y="980">MT Signals Extreme WilliamsR TS=4 TE=0 TW=1 ZS=0</text>
<text x="11" y="1060">© 2015 NinjaTrader, LLC</text>
</g>
<defs><filter id="sh" x="-10%" y="-50%" width="120%" height="200%"><feGaussianBlur in="SourceAlpha" stdDeviation="2"/><feOffset dx="3" dy="3"/><feComponentTransfer><feFuncA type="linear" slope="0.6"/></feComponentTransfer><feMerge><feMergeNode/><feMergeNode in="SourceGraphic"/></feMerge></filter></defs>
<g font-family="Liberation Serif, serif" font-style="italic" font-weight="normal" font-size="23" fill="#ff0000" stroke="#ffffff" stroke-width="3" paint-order="stroke" filter="url(#sh)" text-rendering="geometricPrecision">
<text transform="translate(944,418) rotate(-12) skewX(-12)" textLength="388" lengthAdjust="spacingAndGlyphs">www.trading-software-collection.com</text>
<text transform="translate(927,455) rotate(-12.4) skewX(-12)" textLength="445" lengthAdjust="spacingAndGlyphs">andreybbrv@gmail.com, Skype: andreybbrv</text>
</g>
</svg>
<div id="scroll">
 <div class="abs" style="left:0;top:0;width:1558px;height:1px;background:#fff"></div>
 <div class="abs" style="left:-1px;top:0;width:1px;height:25px;background:#dadada"></div>
 <div class="abs" style="left:-1px;top:24px;width:1559px;height:1px;background:#dadada"></div>
 <svg class="abs" style="left:4px;top:7px" width="9" height="10"><path d="M7,1 L2.5,5 L7,9" fill="none" stroke="#505050" stroke-width="2.2"/></svg>
 <div class="abs" style="left:1472px;top:1px;width:69px;height:22px;background:#cdcdcd"></div>
 <svg class="abs" style="left:1545px;top:7px" width="9" height="10"><path d="M2,1 L6.5,5 L2,9" fill="none" stroke="#505050" stroke-width="2.2"/></svg>
</div>
<div class="abs" style="left:0;top:0;width:1574px;height:1px;background:#cfcfcf"></div>
<div class="abs" style="left:0;top:0;width:1px;height:1121px;background:#cfcfcf"></div>
<div class="abs" style="left:0;top:1120px;width:1574px;height:1px;background:#cfcfcf"></div>
<div class="abs" style="left:1573px;top:0;width:1px;height:1121px;background:#cfcfcf"></div>
<div id="dlg"><div id="dlgtitle">Indicators</div><div id="dlgclose">x</div></div>
<div class="abs" style="left:85px;top:535px;width:562px;height:487px;background:#f0f0f0"></div>
<div class="abs" style="left:85px;top:535px;width:562px;height:422px;box-sizing:border-box;border-top:2px solid #8c8c8c;border-left:2px solid #8c8c8c;border-bottom:1px solid #fcfcfc;border-right:1px solid #fcfcfc"></div>
<div class="lb" style="left:87px;top:537px;width:271px;height:237px">
<div style="position:absolute;left:0;top:2px">MT MA Pack HTF</div>
<div style="position:absolute;left:0;top:15px">MT MA Trend X</div>
<div style="position:absolute;left:0;top:28px">MT Price Action EQ HTF</div>
<div style="position:absolute;left:0;top:41px">MT Signals Breakout Multiple Sessions Open</div>
<div style="position:absolute;left:0;top:54px">MT Signals Breakout Open Range</div>
<div style="position:absolute;left:0;top:67px">MT Signals Breakout Session Open</div>
<div style="position:absolute;left:0;top:80px">MT Signals Breakout Squeeze</div>
<div style="position:absolute;left:0;top:93px">MT Signals Breakout Volume Profile</div>
<div style="position:absolute;left:0;top:106px">MT Signals Extreme Boll</div>
<div style="position:absolute;left:0;top:119px">MT Signals Extreme CCI</div>
<div style="position:absolute;left:0;top:132px">MT Signals Extreme MA Trend X</div>
<div style="position:absolute;left:0;top:145px">MT Signals Extreme MT3 HILO Range Trader</div>
<div style="position:absolute;left:0;top:158px">MT Signals Extreme RSI</div>
<div style="position:absolute;left:0;top:171px">MT Signals Extreme SS CCI</div>
<div style="position:absolute;left:0;top:184px">MT Signals Extreme WilliamsR</div>
<div style="position:absolute;left:0;top:197px">MT Signals Generic Trader</div>
<div style="position:absolute;left:0;top:210px">MT Signals Generic Trader Pro</div>
<div style="position:absolute;left:0;top:223px">MT Signals Levels Dynamic Fib Curr. Sess.</div>
<div style="position:absolute;left:251px;top:1px;width:17px;height:233px;background:#f0f0f0;padding:0"></div>
<div style="position:absolute;left:253px;top:103px;width:15px;height:17px;background:#cdcdcd;padding:0"></div>
<svg style="position:absolute;left:254px;top:6px" width="10" height="7"><path d="M1,5 L5,1 L9,5" fill="none" stroke="#606060" stroke-width="1.3"/></svg>
<svg style="position:absolute;left:254px;top:222px" width="10" height="7"><path d="M1,1 L5,5 L9,1" fill="none" stroke="#606060" stroke-width="1.3"/></svg>
</div>
<div class="lb" style="left:87px;top:779px;width:271px;height:134px">
<div style="position:absolute;top:2px;left:0">MT Signals Extreme Boll TS=3 TE=4 TW=1 ZS=0</div>
<div style="position:absolute;top:15px;left:0">MT Signals Extreme CCI TS=4 TE=1 TW=1 ZS=0</div>
<div style="position:absolute;top:28px;left:0">MT Signals MA Trend X TS=0 TE=0 TW=1 ZS=0</div>
<div style="position:absolute;top:41px;left:0">MT Signals MT3 HILO Range Trader TS=1 TE=3 TW=1 ZS=0</div>
<div style="position:absolute;top:54px;left:0">MT Signals Extreme RSI TS=2 TE=1 TW=1 ZS=0</div>
<div style="position:absolute;top:67px;left:0">MT Signals Extreme SS CCI TS=8 TE=1 TW=1 ZS=0</div>
<div style="position:absolute;top:80px;background:#3399ff;color:#fff;left:1px;width:267px;padding-left:2px">MT Signals Extreme WilliamsR TS=4 TE=0 TW=1 ZS=0</div>
</div>
<div class="btn" style="left:112px;top:925px;width:66px;color:#a0a0a0;border-color:#d5d5d5;background:#f4f4f4">New</div>
<div class="btn" style="left:265px;top:925px;width:66px">Remove</div>
<div class="btn" style="left:174px;top:986px;width:79px">OK</div>
<div class="btn" style="left:327px;top:986px;width:78px;border-color:#3c7fb1;background:linear-gradient(#eaf6fd,#d9f0fc)">Apply</div>
<div class="btn" style="left:480px;top:986px;width:78px">Close</div>
<svg class="abs" style="left:636px;top:1012px" width="9" height="9"><g fill="#b0b0b0"><rect x="6" y="0" width="2" height="2"/><rect x="3" y="3" width="2" height="2"/><rect x="6" y="3" width="2" height="2"/><rect x="0" y="6" width="2" height="2"/><rect x="3" y="6" width="2" height="2"/><rect x="6" y="6" width="2" height="2"/></g></svg>
<div class="abs" style="left:366px;top:535px;width:279px;height:358px;border:1px solid #a0a0a0;border-top:2px solid #6d6d6d;box-sizing:border-box;background:#c8c8c8;overflow:hidden">
<div class="row cat" style="top:2px"><div class="exp">−</div><span style="position:absolute;left:18px">Data</span></div>
<div class="row" style="top:18px"><div class="nm" style="">Calculate on bar close</div><div class="vl" style="">True</div></div>
<div class="row" style="top:34px"><div class="nm" style="">Input series</div><div class="vl" style="">CL 07-15 (150 Tick)</div></div>
<div class="row" style="top:50px"><div class="nm" style="">Maximum bars look ba</div><div class="vl" style="">TwoHundredFiftySix</div></div>
<div class="row cat" style="top:66px"><div class="exp">−</div><span style="position:absolute;left:18px">Visual</span></div>
<div class="row" style="top:82px"><div class="nm" style="color:#8d8d8d">Auto scale</div><div class="vl" style="color:#8d8d8d;font-weight:normal">True</div></div>
<div class="row" style="top:98px"><div class="nm" style="">Displacement</div><div class="vl" style="">0</div></div>
<div class="row" style="top:114px"><div class="nm" style="">Display in Data Box</div><div class="vl" style="">True</div></div>
<div class="row" style="top:130px"><div class="nm" style="background:#c8c8c8">Label</div><div class="vl" style="">MT Signals Extreme W</div></div>
<div class="row" style="top:146px"><div class="nm" style="">Panel</div><div class="vl" style="">6</div></div>
<div class="row" style="top:162px"><div class="nm" style="">Price marker(s)</div><div class="vl" style="">True</div></div>
<div class="row" style="top:178px"><div class="nm" style="">Scale justification</div><div class="vl" style="">Right</div></div>
<div class="row cat" style="top:194px"><div class="exp">−</div><span style="position:absolute;left:18px">Lines</span></div>
<div class="row" style="top:210px"><div class="exp" style="top:3px">+</div><div class="nm" style="">Lower</div><div class="vl" style=""><span style="position:absolute;left:2px;top:2px;width:19px;height:10px;border:1px solid #222;box-sizing:border-box;background:linear-gradient(#fff 0 4px,#888 4px 5px,#fff 5px)"></span><span style="position:absolute;left:28px">-75</span></div></div>
<div class="row" style="top:226px"><div class="exp" style="top:3px">+</div><div class="nm" style="">Upper</div><div class="vl" style=""><span style="position:absolute;left:2px;top:2px;width:19px;height:10px;border:1px solid #222;box-sizing:border-box;background:linear-gradient(#fff 0 4px,#888 4px 5px,#fff 5px)"></span><span style="position:absolute;left:28px">-25</span></div></div>
<div class="row cat" style="top:242px"><div class="exp">−</div><span style="position:absolute;left:18px">MT Alerts</span></div>
<div class="row" style="top:258px"><div class="nm" style="">MT - Alerts Notificatior</div><div class="vl" style=""></div></div>
<div class="row" style="top:274px"><div class="nm" style="">MT - Alerts Notificatior</div><div class="vl" style="">0</div></div>
<div class="row" style="top:290px"><div class="nm" style="">MT - Alerts Re-Arm Se</div><div class="vl" style="">3</div></div>
<div class="row" style="top:306px"><div class="nm" style="">MT - Alerts Text, Audic</div><div class="vl" style="">True</div></div>
<div class="row" style="top:322px"><div class="nm" style="">MT - Alerts Trade Entry</div><div class="vl" style="">alert3.wav</div></div>
<div class="row" style="top:338px"><div class="nm" style="">MT - Alerts Trade Exit</div><div class="vl" style="">alert4.wav</div></div>
<div class="row" style="top:354px"><div class="nm" style=""></div><div class="vl" style=""></div></div>
<div style="position:absolute;left:260px;top:0px;width:17px;height:356px;background:#f0f0f0"></div>
<div style="position:absolute;left:262px;top:229px;width:16px;height:41px;background:#cdcdcd"></div>
<svg style="position:absolute;left:265px;top:6px" width="10" height="7"><path d="M1,5 L5,1 L9,5" fill="none" stroke="#606060" stroke-width="1.3"/></svg>
<svg style="position:absolute;left:265px;top:342px" width="10" height="7"><path d="M1,1 L5,5 L9,1" fill="none" stroke="#606060" stroke-width="1.3"/></svg>
</div>
<div class="abs" style="left:366px;top:896px;width:279px;height:59px;border:1px solid #a0a0a0;box-sizing:border-box;background:#f0f0f0;font-size:11.2px;line-height:13px;padding:3px 0 0 4px;color:#000"><b>Label</b><br>Mean Reversion Extreme WilliamsR and directional<br>bias - version 7.0.1.64 - Copyright 2010,2011,2012,...</div>
</body></html>
